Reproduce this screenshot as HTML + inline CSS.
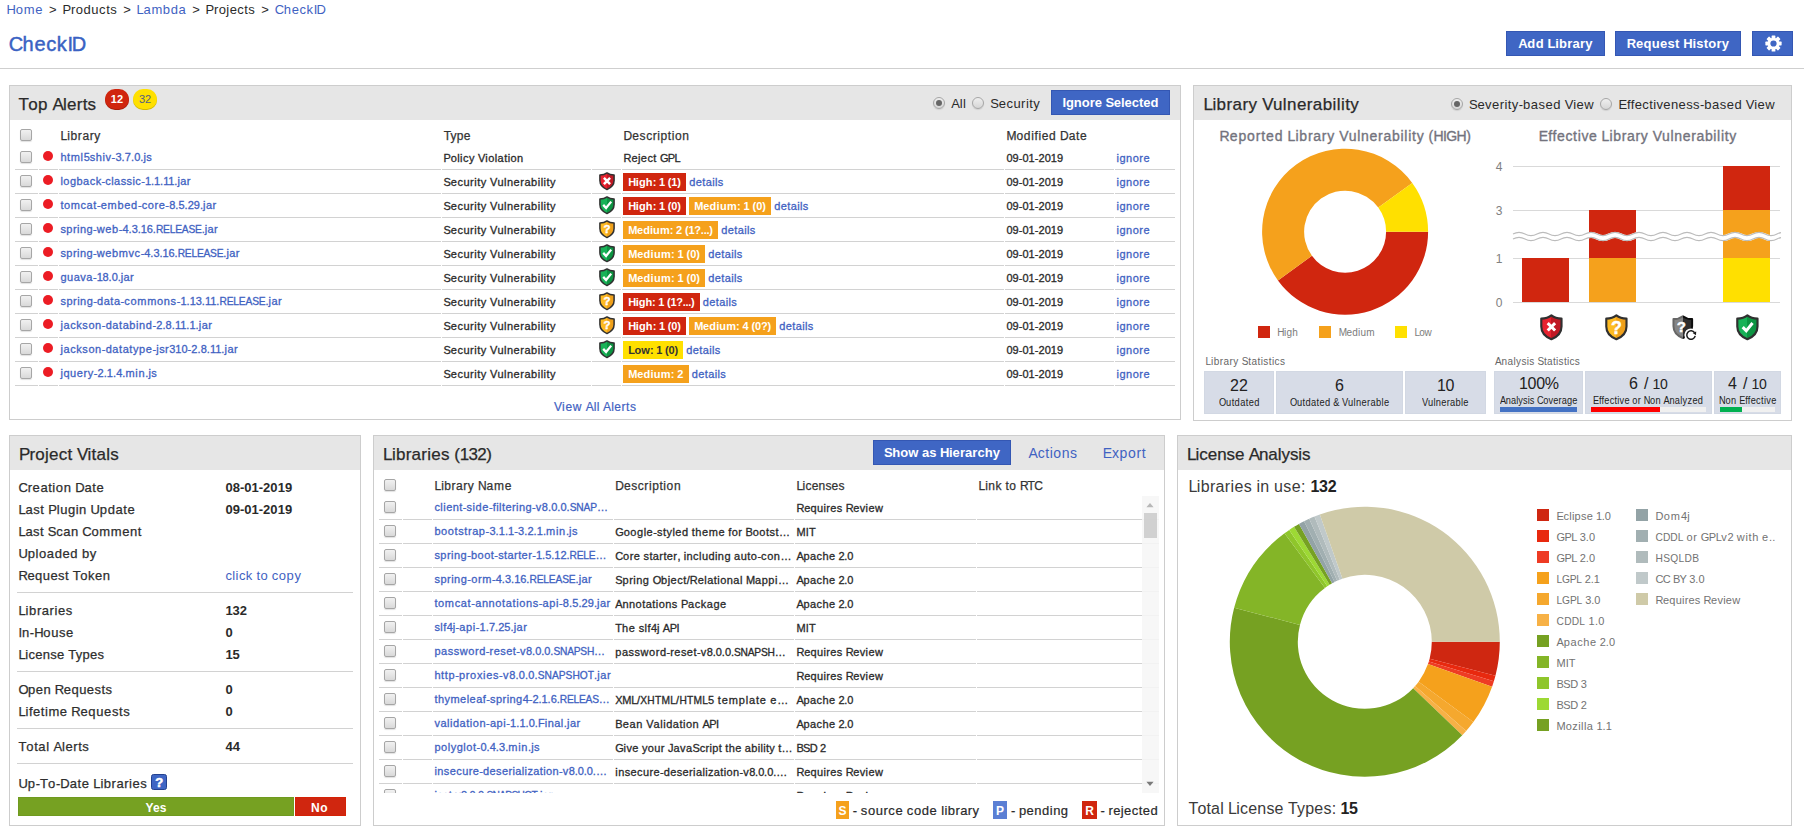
<!DOCTYPE html>
<html><head><meta charset="utf-8"><title>CheckID</title><style>
html,body{margin:0;padding:0;background:#fff}
body{width:1810px;height:834px;overflow:hidden;position:relative;font-family:"Liberation Sans",sans-serif;}
.a{position:absolute;box-sizing:border-box;display:block}
.t{position:absolute;white-space:nowrap;display:block}
.clip{position:absolute;overflow:hidden}
svg{overflow:visible}
</style></head><body>
<span class="t" style="left:6.60px;top:2px;font-size:13px;line-height:15px;color:#3f62c2;"><span style="letter-spacing:-0.2px">H</span><span style="letter-spacing:0.74px">ome</span></span>
<span class="t" style="left:49.10px;top:2px;font-size:13px;line-height:15px;color:#2a2a2a;">&gt;</span>
<span class="t" style="left:62.50px;top:2px;font-size:13px;line-height:15px;color:#2a2a2a;"><span style="letter-spacing:-0.2px">P</span><span style="letter-spacing:0.53px">roducts</span></span>
<span class="t" style="left:123.30px;top:2px;font-size:13px;line-height:15px;color:#2a2a2a;">&gt;</span>
<span class="t" style="left:136.60px;top:2px;font-size:13px;line-height:15px;color:#3f62c2;"><span style="letter-spacing:-0.24px">L</span><span style="letter-spacing:0.59px">ambda</span></span>
<span class="t" style="left:192.30px;top:2px;font-size:13px;line-height:15px;color:#2a2a2a;">&gt;</span>
<span class="t" style="left:205.50px;top:2px;font-size:13px;line-height:15px;color:#2a2a2a;"><span style="letter-spacing:-0.26px">P</span><span style="letter-spacing:0.43px">rojects</span></span>
<span class="t" style="left:261.20px;top:2px;font-size:13px;line-height:15px;color:#2a2a2a;">&gt;</span>
<span class="t" style="left:274.70px;top:2px;font-size:13px;line-height:15px;color:#3f62c2;"><span style="letter-spacing:-0.23px">C</span><span style="letter-spacing:0.58px">heck</span><span style="letter-spacing:-0.68px">ID</span></span>
<span class="t" style="left:8.80px;top:33px;font-size:20px;line-height:22px;color:#3a62c3;-webkit-text-stroke:0.45px #3a62c3;"><span style="letter-spacing:-0.65px">C</span><span style="letter-spacing:0.66px">heck</span><span style="letter-spacing:-1.23px">ID</span></span>
<div class="a" style="left:0px;top:68px;width:1804px;height:1px;background:#cfcfcf;"></div>
<div class="a" style="left:1506px;top:31px;width:99px;height:25px;background:#3f66c4;border:1px solid #3457b3;"></div>
<span class="t" style="left:1518.15px;top:36.2px;font-size:13px;line-height:15px;color:#fff;font-weight:bold;"><span style="letter-spacing:-0.17px">A</span><span style="letter-spacing:0.33px">dd</span><span style="letter-spacing:-0.1px"> </span><span style="letter-spacing:-0.15px">L</span><span style="letter-spacing:0.25px">ibrary</span></span>
<div class="a" style="left:1615px;top:31px;width:126px;height:25px;background:#3f66c4;border:1px solid #3457b3;"></div>
<span class="t" style="left:1626.80px;top:36.2px;font-size:13px;line-height:15px;color:#fff;font-weight:bold;"><span style="letter-spacing:-0.18px">R</span><span style="letter-spacing:0.29px">equest</span><span style="letter-spacing:-0.1px"> </span><span style="letter-spacing:-0.18px">H</span><span style="letter-spacing:0.24px">istory</span></span>
<div class="a" style="left:1752px;top:31px;width:41px;height:25px;background:#3f66c4;border:1px solid #3457b3;"></div>
<svg class="a" style="left:1764.5px;top:34.8px" width="17" height="17" viewBox="-9 -9 18 18"><g fill="#fff"><rect x="-2" y="-8.6" width="4" height="5" rx="0.6" transform="rotate(0)"/><rect x="-2" y="-8.6" width="4" height="5" rx="0.6" transform="rotate(45)"/><rect x="-2" y="-8.6" width="4" height="5" rx="0.6" transform="rotate(90)"/><rect x="-2" y="-8.6" width="4" height="5" rx="0.6" transform="rotate(135)"/><rect x="-2" y="-8.6" width="4" height="5" rx="0.6" transform="rotate(180)"/><rect x="-2" y="-8.6" width="4" height="5" rx="0.6" transform="rotate(225)"/><rect x="-2" y="-8.6" width="4" height="5" rx="0.6" transform="rotate(270)"/><rect x="-2" y="-8.6" width="4" height="5" rx="0.6" transform="rotate(315)"/><circle r="6.2"/></g><circle r="3.3" fill="#3f66c4"/></svg>
<div class="a" style="left:9px;top:85px;width:1172px;height:335px;background:#fff;border:1px solid #cdcdcd;"></div>
<div class="a" style="left:10px;top:86px;width:1170px;height:34px;background:#e6e6e6;"></div>
<span class="t" style="left:18.60px;top:95px;font-size:17px;line-height:19px;color:#2a2a2a;-webkit-text-stroke:0.25px #2a2a2a;"><span style="letter-spacing:-0.71px">T</span><span style="letter-spacing:0.34px">op</span><span style="letter-spacing:-0.14px"> </span><span style="letter-spacing:-0.77px">A</span><span style="letter-spacing:0.23px">lerts</span></span>
<div class="a" style="left:1193px;top:85px;width:599px;height:336px;background:#fff;border:1px solid #cdcdcd;"></div>
<div class="a" style="left:1194px;top:86px;width:597px;height:34px;background:#e6e6e6;"></div>
<span class="t" style="left:1203.40px;top:95px;font-size:17px;line-height:19px;color:#2a2a2a;-webkit-text-stroke:0.25px #2a2a2a;"><span style="letter-spacing:-0.44px">L</span><span style="letter-spacing:0.43px">ibrary</span><span style="letter-spacing:-0.04px"> </span><span style="letter-spacing:-0.53px">V</span><span style="letter-spacing:0.41px">ulnerability</span></span>
<div class="a" style="left:9px;top:435px;width:352px;height:391px;background:#fff;border:1px solid #cdcdcd;"></div>
<div class="a" style="left:10px;top:436px;width:350px;height:34px;background:#e6e6e6;"></div>
<span class="t" style="left:18.90px;top:445px;font-size:17px;line-height:19px;color:#2a2a2a;-webkit-text-stroke:0.25px #2a2a2a;"><span style="letter-spacing:-0.79px">P</span><span style="letter-spacing:0.24px">roject</span><span style="letter-spacing:-0.15px"> </span><span style="letter-spacing:-0.79px">V</span><span style="letter-spacing:0.21px">itals</span></span>
<div class="a" style="left:373px;top:435px;width:792px;height:391px;background:#fff;border:1px solid #cdcdcd;"></div>
<div class="a" style="left:374px;top:436px;width:790px;height:34px;background:#e6e6e6;"></div>
<span class="t" style="left:383.10px;top:445px;font-size:17px;line-height:19px;color:#2a2a2a;-webkit-text-stroke:0.25px #2a2a2a;"><span style="letter-spacing:-0.65px">L</span><span style="letter-spacing:0.25px">ibraries</span><span style="letter-spacing:-0.16px"> (</span><span style="letter-spacing:-0.65px">132</span><span style="letter-spacing:-0.17px">)</span></span>
<div class="a" style="left:1177px;top:435px;width:615px;height:391px;background:#fff;border:1px solid #cdcdcd;"></div>
<div class="a" style="left:1178px;top:436px;width:613px;height:34px;background:#e6e6e6;"></div>
<span class="t" style="left:1187.10px;top:445px;font-size:17px;line-height:19px;color:#2a2a2a;-webkit-text-stroke:0.25px #2a2a2a;"><span style="letter-spacing:-1.01px">L</span><span style="letter-spacing:-0.05px">icense</span><span style="letter-spacing:-0.33px"> </span><span style="letter-spacing:-1.21px">A</span><span style="letter-spacing:-0.05px">nalysis</span></span>
<div class="a" style="left:105px;top:89px;width:24px;height:20px;background:#d0260f;border-radius:10px;box-shadow:0 1px 0 #a81d0a;"></div>
<span class="t" style="left:110.75px;top:93px;font-size:11px;line-height:12px;color:#fff;font-weight:bold;"><span style="letter-spacing:0.13px">12</span></span>
<div class="a" style="left:133px;top:89px;width:24px;height:20px;background:#ffe000;border-radius:10px;box-shadow:0 1px 0 #d4ba00;"></div>
<span class="t" style="left:139.00px;top:93px;font-size:11px;line-height:12px;color:#555e80;"><span style="letter-spacing:-0.12px">32</span></span>
<div class="a" style="left:933px;top:97px;width:12px;height:12px;border:1px solid #a6a6a6;border-radius:50%;background:linear-gradient(#efefef,#d6d6d6);box-shadow:0 1px 1px rgba(0,0,0,.10);"></div>
<div class="a" style="left:936px;top:100px;width:6px;height:6px;background:#666;border-radius:50%;"></div>
<span class="t" style="left:951.20px;top:96px;font-size:13px;line-height:15px;color:#2a2a2a;">A<span style="letter-spacing:0.33px">ll</span></span>
<div class="a" style="left:972px;top:97px;width:12px;height:12px;border:1px solid #a6a6a6;border-radius:50%;background:linear-gradient(#efefef,#d6d6d6);box-shadow:0 1px 1px rgba(0,0,0,.10);"></div>
<span class="t" style="left:990.30px;top:96px;font-size:13px;line-height:15px;color:#2a2a2a;"><span style="letter-spacing:-0.21px">S</span><span style="letter-spacing:0.46px">ecurity</span></span>
<div class="a" style="left:1051px;top:90px;width:119px;height:25px;background:#3f66c4;border:1px solid #3457b3;"></div>
<span class="t" style="left:1062.50px;top:95.2px;font-size:13px;line-height:15px;color:#fff;font-weight:bold;"><span style="letter-spacing:-0.2px">I</span><span style="letter-spacing:0.01px">gnore</span><span style="letter-spacing:-0.24px"> </span><span style="letter-spacing:-0.49px">S</span><span style="letter-spacing:0.01px">elected</span></span>
<div class="a" style="left:20px;top:129px;width:12px;height:12px;border:1px solid #a6a6a6;border-radius:2px;background:linear-gradient(#f1f1f1,#d9d9d9);box-shadow:0 1px 1px rgba(0,0,0,.12);"></div>
<span class="t" style="left:60.50px;top:129px;font-size:12px;line-height:14px;color:#333;-webkit-text-stroke:0.25px #333;"><span style="letter-spacing:0.08px">L</span><span style="letter-spacing:0.62px">ibrary</span></span>
<span class="t" style="left:443.70px;top:129px;font-size:12px;line-height:14px;color:#333;-webkit-text-stroke:0.25px #333;"><span style="letter-spacing:-0.47px">T</span><span style="letter-spacing:0.26px">ype</span></span>
<span class="t" style="left:623.60px;top:129px;font-size:12px;line-height:14px;color:#333;-webkit-text-stroke:0.25px #333;"><span style="letter-spacing:0.03px">D</span><span style="letter-spacing:0.59px">escription</span></span>
<span class="t" style="left:1006.40px;top:129px;font-size:12px;line-height:14px;color:#333;-webkit-text-stroke:0.25px #333;"><span style="letter-spacing:0.12px">M</span><span style="letter-spacing:0.64px">odified</span><span style="letter-spacing:0.18px"> </span><span style="letter-spacing:0.11px">D</span><span style="letter-spacing:0.7px">ate</span></span>
<div class="a" style="left:15px;top:169px;width:23px;height:1px;background:#d2d2d2;"></div>
<div class="a" style="left:39px;top:169px;width:19px;height:1px;background:#d2d2d2;"></div>
<div class="a" style="left:59px;top:169px;width:382px;height:1px;background:#d2d2d2;"></div>
<div class="a" style="left:442px;top:169px;width:149px;height:1px;background:#d2d2d2;"></div>
<div class="a" style="left:592px;top:169px;width:29px;height:1px;background:#d2d2d2;"></div>
<div class="a" style="left:622px;top:169px;width:382px;height:1px;background:#d2d2d2;"></div>
<div class="a" style="left:1005px;top:169px;width:109px;height:1px;background:#d2d2d2;"></div>
<div class="a" style="left:1115px;top:169px;width:60px;height:1px;background:#d2d2d2;"></div>
<div class="a" style="left:20px;top:151px;width:12px;height:12px;border:1px solid #a6a6a6;border-radius:2px;background:linear-gradient(#f1f1f1,#d9d9d9);box-shadow:0 1px 1px rgba(0,0,0,.12);"></div>
<div class="a" style="left:43px;top:151px;width:10px;height:10px;background:#ec1c24;border-radius:50%;"></div>
<span class="t" style="left:60.40px;top:151px;font-size:11px;line-height:12px;color:#3f62c2;-webkit-text-stroke:0.3px #3f62c2;"><span style="letter-spacing:0.61px">html</span><span style="letter-spacing:0.02px">5</span><span style="letter-spacing:0.57px">shiv</span><span style="letter-spacing:0.16px">-</span><span style="letter-spacing:0.02px">3</span><span style="letter-spacing:0.14px">.</span><span style="letter-spacing:0.02px">7</span><span style="letter-spacing:0.14px">.</span><span style="letter-spacing:0.02px">0</span><span style="letter-spacing:0.14px">.</span><span style="letter-spacing:0.46px">js</span></span>
<span class="t" style="left:443.40px;top:152px;font-size:11px;line-height:12px;color:#2a2a2a;-webkit-text-stroke:0.3px #2a2a2a;"><span style="letter-spacing:-0.08px">P</span><span style="letter-spacing:0.44px">olicy</span><span style="letter-spacing:0.09px"> </span><span style="letter-spacing:-0.08px">V</span><span style="letter-spacing:0.44px">iolation</span></span>
<span class="t" style="left:623.60px;top:152px;font-size:11px;line-height:12px;color:#2a2a2a;-webkit-text-stroke:0.3px #2a2a2a;"><span style="letter-spacing:-0.14px">R</span><span style="letter-spacing:0.43px">eject</span><span style="letter-spacing:0.07px"> </span><span style="letter-spacing:-0.71px">GPL</span></span>
<span class="t" style="left:1006.40px;top:152px;font-size:11px;line-height:12px;color:#2a2a2a;-webkit-text-stroke:0.3px #2a2a2a;">09<span style="letter-spacing:0.15px">-</span>01<span style="letter-spacing:0.15px">-</span>2019</span>
<span class="t" style="left:1116.50px;top:152px;font-size:11px;line-height:12px;color:#3f62c2;-webkit-text-stroke:0.3px #3f62c2;"><span style="letter-spacing:0.5px">ignore</span></span>
<div class="a" style="left:15px;top:193px;width:23px;height:1px;background:#d2d2d2;"></div>
<div class="a" style="left:39px;top:193px;width:19px;height:1px;background:#d2d2d2;"></div>
<div class="a" style="left:59px;top:193px;width:382px;height:1px;background:#d2d2d2;"></div>
<div class="a" style="left:442px;top:193px;width:149px;height:1px;background:#d2d2d2;"></div>
<div class="a" style="left:592px;top:193px;width:29px;height:1px;background:#d2d2d2;"></div>
<div class="a" style="left:622px;top:193px;width:382px;height:1px;background:#d2d2d2;"></div>
<div class="a" style="left:1005px;top:193px;width:109px;height:1px;background:#d2d2d2;"></div>
<div class="a" style="left:1115px;top:193px;width:60px;height:1px;background:#d2d2d2;"></div>
<div class="a" style="left:20px;top:175px;width:12px;height:12px;border:1px solid #a6a6a6;border-radius:2px;background:linear-gradient(#f1f1f1,#d9d9d9);box-shadow:0 1px 1px rgba(0,0,0,.12);"></div>
<div class="a" style="left:43px;top:175px;width:10px;height:10px;background:#ec1c24;border-radius:50%;"></div>
<span class="t" style="left:60.40px;top:175px;font-size:11px;line-height:12px;color:#3f62c2;-webkit-text-stroke:0.3px #3f62c2;"><span style="letter-spacing:0.47px">logback</span><span style="letter-spacing:0.06px">-</span><span style="letter-spacing:0.41px">classic</span><span style="letter-spacing:0.06px">-</span><span style="letter-spacing:-0.14px">1</span><span style="letter-spacing:0.05px">.</span><span style="letter-spacing:-0.14px">1</span><span style="letter-spacing:0.05px">.</span><span style="letter-spacing:-0.13px">11</span><span style="letter-spacing:0.05px">.</span><span style="letter-spacing:0.35px">jar</span></span>
<span class="t" style="left:443.40px;top:176px;font-size:11px;line-height:12px;color:#2a2a2a;-webkit-text-stroke:0.3px #2a2a2a;"><span style="letter-spacing:0.02px">S</span><span style="letter-spacing:0.53px">ecurity</span><span style="letter-spacing:0.13px"> </span><span style="letter-spacing:0.02px">V</span><span style="letter-spacing:0.51px">ulnerability</span></span>
<svg class="a" style="left:599.3px;top:171.7px" width="16" height="18.4" viewBox="0 0 16 18.4"><defs><linearGradient id="gr599171" x1="0" x2="1" y1="0" y2="0"><stop offset="0.5" stop-color="#e8222f"/><stop offset="0.5" stop-color="#c01924"/></linearGradient></defs><path d="M8 0.9C9.9 2.4 12.4 3.1 15.1 3.1L15.1 8.6C15.1 13 11.6 16.1 8 17.6C4.4 16.1 0.9 13 0.9 8.6L0.9 3.1C3.6 3.1 6.1 2.4 8 0.9Z" fill="url(#gr599171)" stroke="#303030" stroke-width="1.5" stroke-linejoin="round"/><path d="M4.9 5.9L11.1 12.1M11.1 5.9L4.9 12.1" stroke="#fff" stroke-width="2.5" fill="none"/></svg>
<div class="a" style="left:623px;top:173px;width:63px;height:18px;background:#d0260f;"></div>
<span class="t" style="left:628.25px;top:176px;font-size:11px;line-height:12px;color:#fff;font-weight:bold;"><span style="letter-spacing:-0.34px">H</span><span style="letter-spacing:0.09px">igh</span><span style="letter-spacing:-0.18px">: </span><span style="letter-spacing:-0.14px">1</span><span style="letter-spacing:-0.18px"> (</span><span style="letter-spacing:-0.14px">1</span><span style="letter-spacing:-0.19px">)</span></span>
<span class="t" style="left:689.30px;top:176px;font-size:11px;line-height:12px;color:#3f62c2;-webkit-text-stroke:0.3px #3f62c2;"><span style="letter-spacing:0.37px">details</span></span>
<span class="t" style="left:1006.40px;top:176px;font-size:11px;line-height:12px;color:#2a2a2a;-webkit-text-stroke:0.3px #2a2a2a;">09<span style="letter-spacing:0.15px">-</span>01<span style="letter-spacing:0.15px">-</span>2019</span>
<span class="t" style="left:1116.50px;top:176px;font-size:11px;line-height:12px;color:#3f62c2;-webkit-text-stroke:0.3px #3f62c2;"><span style="letter-spacing:0.5px">ignore</span></span>
<div class="a" style="left:15px;top:217px;width:23px;height:1px;background:#d2d2d2;"></div>
<div class="a" style="left:39px;top:217px;width:19px;height:1px;background:#d2d2d2;"></div>
<div class="a" style="left:59px;top:217px;width:382px;height:1px;background:#d2d2d2;"></div>
<div class="a" style="left:442px;top:217px;width:149px;height:1px;background:#d2d2d2;"></div>
<div class="a" style="left:592px;top:217px;width:29px;height:1px;background:#d2d2d2;"></div>
<div class="a" style="left:622px;top:217px;width:382px;height:1px;background:#d2d2d2;"></div>
<div class="a" style="left:1005px;top:217px;width:109px;height:1px;background:#d2d2d2;"></div>
<div class="a" style="left:1115px;top:217px;width:60px;height:1px;background:#d2d2d2;"></div>
<div class="a" style="left:20px;top:199px;width:12px;height:12px;border:1px solid #a6a6a6;border-radius:2px;background:linear-gradient(#f1f1f1,#d9d9d9);box-shadow:0 1px 1px rgba(0,0,0,.12);"></div>
<div class="a" style="left:43px;top:199px;width:10px;height:10px;background:#ec1c24;border-radius:50%;"></div>
<span class="t" style="left:60.40px;top:199px;font-size:11px;line-height:12px;color:#3f62c2;-webkit-text-stroke:0.3px #3f62c2;"><span style="letter-spacing:0.58px">tomcat</span><span style="letter-spacing:0.13px">-</span><span style="letter-spacing:0.71px">embed</span><span style="letter-spacing:0.13px">-</span><span style="letter-spacing:0.57px">core</span><span style="letter-spacing:0.13px">-</span><span style="letter-spacing:-0.03px">8</span><span style="letter-spacing:0.11px">.</span><span style="letter-spacing:-0.03px">5</span><span style="letter-spacing:0.11px">.</span><span style="letter-spacing:-0.03px">29</span><span style="letter-spacing:0.11px">.</span><span style="letter-spacing:0.43px">jar</span></span>
<span class="t" style="left:443.40px;top:200px;font-size:11px;line-height:12px;color:#2a2a2a;-webkit-text-stroke:0.3px #2a2a2a;"><span style="letter-spacing:0.02px">S</span><span style="letter-spacing:0.53px">ecurity</span><span style="letter-spacing:0.13px"> </span><span style="letter-spacing:0.02px">V</span><span style="letter-spacing:0.51px">ulnerability</span></span>
<svg class="a" style="left:599.3px;top:195.7px" width="16" height="18.4" viewBox="0 0 16 18.4"><defs><linearGradient id="gg599195" x1="0" x2="1" y1="0" y2="0"><stop offset="0.5" stop-color="#18b257"/><stop offset="0.5" stop-color="#0d9442"/></linearGradient></defs><path d="M8 0.9C9.9 2.4 12.4 3.1 15.1 3.1L15.1 8.6C15.1 13 11.6 16.1 8 17.6C4.4 16.1 0.9 13 0.9 8.6L0.9 3.1C3.6 3.1 6.1 2.4 8 0.9Z" fill="url(#gg599195)" stroke="#303030" stroke-width="1.5" stroke-linejoin="round"/><path d="M4.2 8.9L7.1 12L12.2 5.6" stroke="#fff" stroke-width="2.3" fill="none"/></svg>
<div class="a" style="left:623px;top:197px;width:63px;height:18px;background:#d0260f;"></div>
<span class="t" style="left:628.25px;top:200px;font-size:11px;line-height:12px;color:#fff;font-weight:bold;"><span style="letter-spacing:-0.34px">H</span><span style="letter-spacing:0.09px">igh</span><span style="letter-spacing:-0.18px">: </span><span style="letter-spacing:-0.14px">1</span><span style="letter-spacing:-0.18px"> (</span><span style="letter-spacing:-0.14px">0</span><span style="letter-spacing:-0.19px">)</span></span>
<div class="a" style="left:689px;top:197px;width:82px;height:18px;background:#f5a11c;"></div>
<span class="t" style="left:694.25px;top:200px;font-size:11px;line-height:12px;color:#fff;font-weight:bold;"><span style="letter-spacing:-0.18px">M</span><span style="letter-spacing:0.26px">edium</span><span style="letter-spacing:-0.1px">: </span>1<span style="letter-spacing:-0.1px"> (</span>0<span style="letter-spacing:-0.11px">)</span></span>
<span class="t" style="left:774.30px;top:200px;font-size:11px;line-height:12px;color:#3f62c2;-webkit-text-stroke:0.3px #3f62c2;"><span style="letter-spacing:0.37px">details</span></span>
<span class="t" style="left:1006.40px;top:200px;font-size:11px;line-height:12px;color:#2a2a2a;-webkit-text-stroke:0.3px #2a2a2a;">09<span style="letter-spacing:0.15px">-</span>01<span style="letter-spacing:0.15px">-</span>2019</span>
<span class="t" style="left:1116.50px;top:200px;font-size:11px;line-height:12px;color:#3f62c2;-webkit-text-stroke:0.3px #3f62c2;"><span style="letter-spacing:0.5px">ignore</span></span>
<div class="a" style="left:15px;top:241px;width:23px;height:1px;background:#d2d2d2;"></div>
<div class="a" style="left:39px;top:241px;width:19px;height:1px;background:#d2d2d2;"></div>
<div class="a" style="left:59px;top:241px;width:382px;height:1px;background:#d2d2d2;"></div>
<div class="a" style="left:442px;top:241px;width:149px;height:1px;background:#d2d2d2;"></div>
<div class="a" style="left:592px;top:241px;width:29px;height:1px;background:#d2d2d2;"></div>
<div class="a" style="left:622px;top:241px;width:382px;height:1px;background:#d2d2d2;"></div>
<div class="a" style="left:1005px;top:241px;width:109px;height:1px;background:#d2d2d2;"></div>
<div class="a" style="left:1115px;top:241px;width:60px;height:1px;background:#d2d2d2;"></div>
<div class="a" style="left:20px;top:223px;width:12px;height:12px;border:1px solid #a6a6a6;border-radius:2px;background:linear-gradient(#f1f1f1,#d9d9d9);box-shadow:0 1px 1px rgba(0,0,0,.12);"></div>
<div class="a" style="left:43px;top:223px;width:10px;height:10px;background:#ec1c24;border-radius:50%;"></div>
<span class="t" style="left:60.40px;top:223px;font-size:11px;line-height:12px;color:#3f62c2;-webkit-text-stroke:0.3px #3f62c2;"><span style="letter-spacing:0.45px">spring</span><span style="letter-spacing:0.08px">-</span><span style="letter-spacing:0.61px">web</span><span style="letter-spacing:0.08px">-</span><span style="letter-spacing:-0.12px">4</span><span style="letter-spacing:0.06px">.</span><span style="letter-spacing:-0.12px">3</span><span style="letter-spacing:0.06px">.</span><span style="letter-spacing:-0.12px">16</span><span style="letter-spacing:0.06px">.</span><span style="letter-spacing:-0.21px;font-size:10.23px">RELEASE</span><span style="letter-spacing:0.06px">.</span><span style="letter-spacing:0.37px">jar</span></span>
<span class="t" style="left:443.40px;top:224px;font-size:11px;line-height:12px;color:#2a2a2a;-webkit-text-stroke:0.3px #2a2a2a;"><span style="letter-spacing:0.02px">S</span><span style="letter-spacing:0.53px">ecurity</span><span style="letter-spacing:0.13px"> </span><span style="letter-spacing:0.02px">V</span><span style="letter-spacing:0.51px">ulnerability</span></span>
<svg class="a" style="left:599.3px;top:219.7px" width="16" height="18.4" viewBox="0 0 16 18.4"><defs><linearGradient id="gy599219" x1="0" x2="1" y1="0" y2="0"><stop offset="0.5" stop-color="#fdbb22"/><stop offset="0.5" stop-color="#efa01b"/></linearGradient></defs><path d="M8 0.9C9.9 2.4 12.4 3.1 15.1 3.1L15.1 8.6C15.1 13 11.6 16.1 8 17.6C4.4 16.1 0.9 13 0.9 8.6L0.9 3.1C3.6 3.1 6.1 2.4 8 0.9Z" fill="url(#gy599219)" stroke="#303030" stroke-width="1.5" stroke-linejoin="round"/><text x="8" y="13.4" font-family="Liberation Sans,sans-serif" font-weight="bold" font-size="11.5" fill="#fff" stroke="#fff" stroke-width="0.4" text-anchor="middle">?</text></svg>
<div class="a" style="left:623px;top:221px;width:95px;height:18px;background:#f5a11c;"></div>
<span class="t" style="left:628.25px;top:224px;font-size:11px;line-height:12px;color:#fff;font-weight:bold;"><span style="letter-spacing:-0.43px">M</span><span style="letter-spacing:0.07px">edium</span><span style="letter-spacing:-0.19px">: </span><span style="letter-spacing:-0.17px">2</span><span style="letter-spacing:-0.19px"> (</span><span style="letter-spacing:-0.17px">1</span><span style="letter-spacing:-0.22px">?...)</span></span>
<span class="t" style="left:721.30px;top:224px;font-size:11px;line-height:12px;color:#3f62c2;-webkit-text-stroke:0.3px #3f62c2;"><span style="letter-spacing:0.37px">details</span></span>
<span class="t" style="left:1006.40px;top:224px;font-size:11px;line-height:12px;color:#2a2a2a;-webkit-text-stroke:0.3px #2a2a2a;">09<span style="letter-spacing:0.15px">-</span>01<span style="letter-spacing:0.15px">-</span>2019</span>
<span class="t" style="left:1116.50px;top:224px;font-size:11px;line-height:12px;color:#3f62c2;-webkit-text-stroke:0.3px #3f62c2;"><span style="letter-spacing:0.5px">ignore</span></span>
<div class="a" style="left:15px;top:265px;width:23px;height:1px;background:#d2d2d2;"></div>
<div class="a" style="left:39px;top:265px;width:19px;height:1px;background:#d2d2d2;"></div>
<div class="a" style="left:59px;top:265px;width:382px;height:1px;background:#d2d2d2;"></div>
<div class="a" style="left:442px;top:265px;width:149px;height:1px;background:#d2d2d2;"></div>
<div class="a" style="left:592px;top:265px;width:29px;height:1px;background:#d2d2d2;"></div>
<div class="a" style="left:622px;top:265px;width:382px;height:1px;background:#d2d2d2;"></div>
<div class="a" style="left:1005px;top:265px;width:109px;height:1px;background:#d2d2d2;"></div>
<div class="a" style="left:1115px;top:265px;width:60px;height:1px;background:#d2d2d2;"></div>
<div class="a" style="left:20px;top:247px;width:12px;height:12px;border:1px solid #a6a6a6;border-radius:2px;background:linear-gradient(#f1f1f1,#d9d9d9);box-shadow:0 1px 1px rgba(0,0,0,.12);"></div>
<div class="a" style="left:43px;top:247px;width:10px;height:10px;background:#ec1c24;border-radius:50%;"></div>
<span class="t" style="left:60.40px;top:247px;font-size:11px;line-height:12px;color:#3f62c2;-webkit-text-stroke:0.3px #3f62c2;"><span style="letter-spacing:0.44px">spring</span><span style="letter-spacing:0.07px">-</span><span style="letter-spacing:0.59px">webmvc</span><span style="letter-spacing:0.07px">-</span><span style="letter-spacing:-0.13px">4</span><span style="letter-spacing:0.06px">.</span><span style="letter-spacing:-0.13px">3</span><span style="letter-spacing:0.06px">.</span><span style="letter-spacing:-0.13px">16</span><span style="letter-spacing:0.06px">.</span><span style="letter-spacing:-0.23px;font-size:10.23px">RELEASE</span><span style="letter-spacing:0.06px">.</span><span style="letter-spacing:0.36px">jar</span></span>
<span class="t" style="left:443.40px;top:248px;font-size:11px;line-height:12px;color:#2a2a2a;-webkit-text-stroke:0.3px #2a2a2a;"><span style="letter-spacing:0.02px">S</span><span style="letter-spacing:0.53px">ecurity</span><span style="letter-spacing:0.13px"> </span><span style="letter-spacing:0.02px">V</span><span style="letter-spacing:0.51px">ulnerability</span></span>
<svg class="a" style="left:599.3px;top:243.7px" width="16" height="18.4" viewBox="0 0 16 18.4"><defs><linearGradient id="gg599243" x1="0" x2="1" y1="0" y2="0"><stop offset="0.5" stop-color="#18b257"/><stop offset="0.5" stop-color="#0d9442"/></linearGradient></defs><path d="M8 0.9C9.9 2.4 12.4 3.1 15.1 3.1L15.1 8.6C15.1 13 11.6 16.1 8 17.6C4.4 16.1 0.9 13 0.9 8.6L0.9 3.1C3.6 3.1 6.1 2.4 8 0.9Z" fill="url(#gg599243)" stroke="#303030" stroke-width="1.5" stroke-linejoin="round"/><path d="M4.2 8.9L7.1 12L12.2 5.6" stroke="#fff" stroke-width="2.3" fill="none"/></svg>
<div class="a" style="left:623px;top:245px;width:82px;height:18px;background:#f5a11c;"></div>
<span class="t" style="left:628.25px;top:248px;font-size:11px;line-height:12px;color:#fff;font-weight:bold;"><span style="letter-spacing:-0.18px">M</span><span style="letter-spacing:0.26px">edium</span><span style="letter-spacing:-0.1px">: </span>1<span style="letter-spacing:-0.1px"> (</span>0<span style="letter-spacing:-0.11px">)</span></span>
<span class="t" style="left:708.30px;top:248px;font-size:11px;line-height:12px;color:#3f62c2;-webkit-text-stroke:0.3px #3f62c2;"><span style="letter-spacing:0.37px">details</span></span>
<span class="t" style="left:1006.40px;top:248px;font-size:11px;line-height:12px;color:#2a2a2a;-webkit-text-stroke:0.3px #2a2a2a;">09<span style="letter-spacing:0.15px">-</span>01<span style="letter-spacing:0.15px">-</span>2019</span>
<span class="t" style="left:1116.50px;top:248px;font-size:11px;line-height:12px;color:#3f62c2;-webkit-text-stroke:0.3px #3f62c2;"><span style="letter-spacing:0.5px">ignore</span></span>
<div class="a" style="left:15px;top:289px;width:23px;height:1px;background:#d2d2d2;"></div>
<div class="a" style="left:39px;top:289px;width:19px;height:1px;background:#d2d2d2;"></div>
<div class="a" style="left:59px;top:289px;width:382px;height:1px;background:#d2d2d2;"></div>
<div class="a" style="left:442px;top:289px;width:149px;height:1px;background:#d2d2d2;"></div>
<div class="a" style="left:592px;top:289px;width:29px;height:1px;background:#d2d2d2;"></div>
<div class="a" style="left:622px;top:289px;width:382px;height:1px;background:#d2d2d2;"></div>
<div class="a" style="left:1005px;top:289px;width:109px;height:1px;background:#d2d2d2;"></div>
<div class="a" style="left:1115px;top:289px;width:60px;height:1px;background:#d2d2d2;"></div>
<div class="a" style="left:20px;top:271px;width:12px;height:12px;border:1px solid #a6a6a6;border-radius:2px;background:linear-gradient(#f1f1f1,#d9d9d9);box-shadow:0 1px 1px rgba(0,0,0,.12);"></div>
<div class="a" style="left:43px;top:271px;width:10px;height:10px;background:#ec1c24;border-radius:50%;"></div>
<span class="t" style="left:60.40px;top:271px;font-size:11px;line-height:12px;color:#3f62c2;-webkit-text-stroke:0.3px #3f62c2;"><span style="letter-spacing:0.51px">guava</span><span style="letter-spacing:0.06px">-</span><span style="letter-spacing:-0.15px">18</span><span style="letter-spacing:0.05px">.</span><span style="letter-spacing:-0.15px">0</span><span style="letter-spacing:0.05px">.</span><span style="letter-spacing:0.35px">jar</span></span>
<span class="t" style="left:443.40px;top:272px;font-size:11px;line-height:12px;color:#2a2a2a;-webkit-text-stroke:0.3px #2a2a2a;"><span style="letter-spacing:0.02px">S</span><span style="letter-spacing:0.53px">ecurity</span><span style="letter-spacing:0.13px"> </span><span style="letter-spacing:0.02px">V</span><span style="letter-spacing:0.51px">ulnerability</span></span>
<svg class="a" style="left:599.3px;top:267.7px" width="16" height="18.4" viewBox="0 0 16 18.4"><defs><linearGradient id="gg599267" x1="0" x2="1" y1="0" y2="0"><stop offset="0.5" stop-color="#18b257"/><stop offset="0.5" stop-color="#0d9442"/></linearGradient></defs><path d="M8 0.9C9.9 2.4 12.4 3.1 15.1 3.1L15.1 8.6C15.1 13 11.6 16.1 8 17.6C4.4 16.1 0.9 13 0.9 8.6L0.9 3.1C3.6 3.1 6.1 2.4 8 0.9Z" fill="url(#gg599267)" stroke="#303030" stroke-width="1.5" stroke-linejoin="round"/><path d="M4.2 8.9L7.1 12L12.2 5.6" stroke="#fff" stroke-width="2.3" fill="none"/></svg>
<div class="a" style="left:623px;top:269px;width:82px;height:18px;background:#f5a11c;"></div>
<span class="t" style="left:628.25px;top:272px;font-size:11px;line-height:12px;color:#fff;font-weight:bold;"><span style="letter-spacing:-0.18px">M</span><span style="letter-spacing:0.26px">edium</span><span style="letter-spacing:-0.1px">: </span>1<span style="letter-spacing:-0.1px"> (</span>0<span style="letter-spacing:-0.11px">)</span></span>
<span class="t" style="left:708.30px;top:272px;font-size:11px;line-height:12px;color:#3f62c2;-webkit-text-stroke:0.3px #3f62c2;"><span style="letter-spacing:0.37px">details</span></span>
<span class="t" style="left:1006.40px;top:272px;font-size:11px;line-height:12px;color:#2a2a2a;-webkit-text-stroke:0.3px #2a2a2a;">09<span style="letter-spacing:0.15px">-</span>01<span style="letter-spacing:0.15px">-</span>2019</span>
<span class="t" style="left:1116.50px;top:272px;font-size:11px;line-height:12px;color:#3f62c2;-webkit-text-stroke:0.3px #3f62c2;"><span style="letter-spacing:0.5px">ignore</span></span>
<div class="a" style="left:15px;top:313px;width:23px;height:1px;background:#d2d2d2;"></div>
<div class="a" style="left:39px;top:313px;width:19px;height:1px;background:#d2d2d2;"></div>
<div class="a" style="left:59px;top:313px;width:382px;height:1px;background:#d2d2d2;"></div>
<div class="a" style="left:442px;top:313px;width:149px;height:1px;background:#d2d2d2;"></div>
<div class="a" style="left:592px;top:313px;width:29px;height:1px;background:#d2d2d2;"></div>
<div class="a" style="left:622px;top:313px;width:382px;height:1px;background:#d2d2d2;"></div>
<div class="a" style="left:1005px;top:313px;width:109px;height:1px;background:#d2d2d2;"></div>
<div class="a" style="left:1115px;top:313px;width:60px;height:1px;background:#d2d2d2;"></div>
<div class="a" style="left:20px;top:295px;width:12px;height:12px;border:1px solid #a6a6a6;border-radius:2px;background:linear-gradient(#f1f1f1,#d9d9d9);box-shadow:0 1px 1px rgba(0,0,0,.12);"></div>
<div class="a" style="left:43px;top:295px;width:10px;height:10px;background:#ec1c24;border-radius:50%;"></div>
<span class="t" style="left:60.40px;top:295px;font-size:11px;line-height:12px;color:#3f62c2;-webkit-text-stroke:0.3px #3f62c2;"><span style="letter-spacing:0.49px">spring</span><span style="letter-spacing:0.1px">-</span><span style="letter-spacing:0.53px">data</span><span style="letter-spacing:0.1px">-</span><span style="letter-spacing:0.67px">commons</span><span style="letter-spacing:0.1px">-</span><span style="letter-spacing:-0.07px">1</span><span style="letter-spacing:0.09px">.</span><span style="letter-spacing:-0.07px">13</span><span style="letter-spacing:0.09px">.</span><span style="letter-spacing:-0.07px">11</span><span style="letter-spacing:0.09px">.</span><span style="letter-spacing:-0.16px;font-size:10.23px">RELEASE</span><span style="letter-spacing:0.09px">.</span><span style="letter-spacing:0.4px">jar</span></span>
<span class="t" style="left:443.40px;top:296px;font-size:11px;line-height:12px;color:#2a2a2a;-webkit-text-stroke:0.3px #2a2a2a;"><span style="letter-spacing:0.02px">S</span><span style="letter-spacing:0.53px">ecurity</span><span style="letter-spacing:0.13px"> </span><span style="letter-spacing:0.02px">V</span><span style="letter-spacing:0.51px">ulnerability</span></span>
<svg class="a" style="left:599.3px;top:291.7px" width="16" height="18.4" viewBox="0 0 16 18.4"><defs><linearGradient id="gy599291" x1="0" x2="1" y1="0" y2="0"><stop offset="0.5" stop-color="#fdbb22"/><stop offset="0.5" stop-color="#efa01b"/></linearGradient></defs><path d="M8 0.9C9.9 2.4 12.4 3.1 15.1 3.1L15.1 8.6C15.1 13 11.6 16.1 8 17.6C4.4 16.1 0.9 13 0.9 8.6L0.9 3.1C3.6 3.1 6.1 2.4 8 0.9Z" fill="url(#gy599291)" stroke="#303030" stroke-width="1.5" stroke-linejoin="round"/><text x="8" y="13.4" font-family="Liberation Sans,sans-serif" font-weight="bold" font-size="11.5" fill="#fff" stroke="#fff" stroke-width="0.4" text-anchor="middle">?</text></svg>
<div class="a" style="left:623px;top:293px;width:76.5px;height:18px;background:#d0260f;"></div>
<span class="t" style="left:628.25px;top:296px;font-size:11px;line-height:12px;color:#fff;font-weight:bold;"><span style="letter-spacing:-0.52px">H</span><span style="letter-spacing:-0.04px">igh</span><span style="letter-spacing:-0.25px">: </span><span style="letter-spacing:-0.28px">1</span><span style="letter-spacing:-0.25px"> (</span><span style="letter-spacing:-0.28px">1</span><span style="letter-spacing:-0.29px">?...)</span></span>
<span class="t" style="left:702.80px;top:296px;font-size:11px;line-height:12px;color:#3f62c2;-webkit-text-stroke:0.3px #3f62c2;"><span style="letter-spacing:0.37px">details</span></span>
<span class="t" style="left:1006.40px;top:296px;font-size:11px;line-height:12px;color:#2a2a2a;-webkit-text-stroke:0.3px #2a2a2a;">09<span style="letter-spacing:0.15px">-</span>01<span style="letter-spacing:0.15px">-</span>2019</span>
<span class="t" style="left:1116.50px;top:296px;font-size:11px;line-height:12px;color:#3f62c2;-webkit-text-stroke:0.3px #3f62c2;"><span style="letter-spacing:0.5px">ignore</span></span>
<div class="a" style="left:15px;top:337px;width:23px;height:1px;background:#d2d2d2;"></div>
<div class="a" style="left:39px;top:337px;width:19px;height:1px;background:#d2d2d2;"></div>
<div class="a" style="left:59px;top:337px;width:382px;height:1px;background:#d2d2d2;"></div>
<div class="a" style="left:442px;top:337px;width:149px;height:1px;background:#d2d2d2;"></div>
<div class="a" style="left:592px;top:337px;width:29px;height:1px;background:#d2d2d2;"></div>
<div class="a" style="left:622px;top:337px;width:382px;height:1px;background:#d2d2d2;"></div>
<div class="a" style="left:1005px;top:337px;width:109px;height:1px;background:#d2d2d2;"></div>
<div class="a" style="left:1115px;top:337px;width:60px;height:1px;background:#d2d2d2;"></div>
<div class="a" style="left:20px;top:319px;width:12px;height:12px;border:1px solid #a6a6a6;border-radius:2px;background:linear-gradient(#f1f1f1,#d9d9d9);box-shadow:0 1px 1px rgba(0,0,0,.12);"></div>
<div class="a" style="left:43px;top:319px;width:10px;height:10px;background:#ec1c24;border-radius:50%;"></div>
<span class="t" style="left:60.40px;top:319px;font-size:11px;line-height:12px;color:#3f62c2;-webkit-text-stroke:0.3px #3f62c2;"><span style="letter-spacing:0.59px">jackson</span><span style="letter-spacing:0.14px">-</span><span style="letter-spacing:0.58px">databind</span><span style="letter-spacing:0.14px">-</span><span style="letter-spacing:-0.01px">2</span><span style="letter-spacing:0.12px">.</span><span style="letter-spacing:-0.01px">8</span><span style="letter-spacing:0.12px">.</span><span style="letter-spacing:-0.01px">11</span><span style="letter-spacing:0.12px">.</span><span style="letter-spacing:-0.01px">1</span><span style="letter-spacing:0.12px">.</span><span style="letter-spacing:0.45px">jar</span></span>
<span class="t" style="left:443.40px;top:320px;font-size:11px;line-height:12px;color:#2a2a2a;-webkit-text-stroke:0.3px #2a2a2a;"><span style="letter-spacing:0.02px">S</span><span style="letter-spacing:0.53px">ecurity</span><span style="letter-spacing:0.13px"> </span><span style="letter-spacing:0.02px">V</span><span style="letter-spacing:0.51px">ulnerability</span></span>
<svg class="a" style="left:599.3px;top:315.7px" width="16" height="18.4" viewBox="0 0 16 18.4"><defs><linearGradient id="gy599315" x1="0" x2="1" y1="0" y2="0"><stop offset="0.5" stop-color="#fdbb22"/><stop offset="0.5" stop-color="#efa01b"/></linearGradient></defs><path d="M8 0.9C9.9 2.4 12.4 3.1 15.1 3.1L15.1 8.6C15.1 13 11.6 16.1 8 17.6C4.4 16.1 0.9 13 0.9 8.6L0.9 3.1C3.6 3.1 6.1 2.4 8 0.9Z" fill="url(#gy599315)" stroke="#303030" stroke-width="1.5" stroke-linejoin="round"/><text x="8" y="13.4" font-family="Liberation Sans,sans-serif" font-weight="bold" font-size="11.5" fill="#fff" stroke="#fff" stroke-width="0.4" text-anchor="middle">?</text></svg>
<div class="a" style="left:623px;top:317px;width:63px;height:18px;background:#d0260f;"></div>
<span class="t" style="left:628.25px;top:320px;font-size:11px;line-height:12px;color:#fff;font-weight:bold;"><span style="letter-spacing:-0.34px">H</span><span style="letter-spacing:0.09px">igh</span><span style="letter-spacing:-0.18px">: </span><span style="letter-spacing:-0.14px">1</span><span style="letter-spacing:-0.18px"> (</span><span style="letter-spacing:-0.14px">0</span><span style="letter-spacing:-0.19px">)</span></span>
<div class="a" style="left:689px;top:317px;width:87px;height:18px;background:#f5a11c;"></div>
<span class="t" style="left:694.25px;top:320px;font-size:11px;line-height:12px;color:#fff;font-weight:bold;"><span style="letter-spacing:-0.36px">M</span><span style="letter-spacing:0.13px">edium</span><span style="letter-spacing:-0.16px">: </span><span style="letter-spacing:-0.12px">4</span><span style="letter-spacing:-0.16px"> (</span><span style="letter-spacing:-0.12px">0</span><span style="letter-spacing:-0.25px">?)</span></span>
<span class="t" style="left:779.30px;top:320px;font-size:11px;line-height:12px;color:#3f62c2;-webkit-text-stroke:0.3px #3f62c2;"><span style="letter-spacing:0.37px">details</span></span>
<span class="t" style="left:1006.40px;top:320px;font-size:11px;line-height:12px;color:#2a2a2a;-webkit-text-stroke:0.3px #2a2a2a;">09<span style="letter-spacing:0.15px">-</span>01<span style="letter-spacing:0.15px">-</span>2019</span>
<span class="t" style="left:1116.50px;top:320px;font-size:11px;line-height:12px;color:#3f62c2;-webkit-text-stroke:0.3px #3f62c2;"><span style="letter-spacing:0.5px">ignore</span></span>
<div class="a" style="left:15px;top:361px;width:23px;height:1px;background:#d2d2d2;"></div>
<div class="a" style="left:39px;top:361px;width:19px;height:1px;background:#d2d2d2;"></div>
<div class="a" style="left:59px;top:361px;width:382px;height:1px;background:#d2d2d2;"></div>
<div class="a" style="left:442px;top:361px;width:149px;height:1px;background:#d2d2d2;"></div>
<div class="a" style="left:592px;top:361px;width:29px;height:1px;background:#d2d2d2;"></div>
<div class="a" style="left:622px;top:361px;width:382px;height:1px;background:#d2d2d2;"></div>
<div class="a" style="left:1005px;top:361px;width:109px;height:1px;background:#d2d2d2;"></div>
<div class="a" style="left:1115px;top:361px;width:60px;height:1px;background:#d2d2d2;"></div>
<div class="a" style="left:20px;top:343px;width:12px;height:12px;border:1px solid #a6a6a6;border-radius:2px;background:linear-gradient(#f1f1f1,#d9d9d9);box-shadow:0 1px 1px rgba(0,0,0,.12);"></div>
<div class="a" style="left:43px;top:343px;width:10px;height:10px;background:#ec1c24;border-radius:50%;"></div>
<span class="t" style="left:60.40px;top:343px;font-size:11px;line-height:12px;color:#3f62c2;-webkit-text-stroke:0.3px #3f62c2;"><span style="letter-spacing:0.59px">jackson</span><span style="letter-spacing:0.14px">-</span><span style="letter-spacing:0.58px">datatype</span><span style="letter-spacing:0.14px">-</span><span style="letter-spacing:0.43px">jsr</span><span style="letter-spacing:-0.01px">310</span><span style="letter-spacing:0.14px">-</span><span style="letter-spacing:-0.01px">2</span><span style="letter-spacing:0.12px">.</span><span style="letter-spacing:-0.01px">8</span><span style="letter-spacing:0.12px">.</span><span style="letter-spacing:-0.01px">11</span><span style="letter-spacing:0.12px">.</span><span style="letter-spacing:0.45px">jar</span></span>
<span class="t" style="left:443.40px;top:344px;font-size:11px;line-height:12px;color:#2a2a2a;-webkit-text-stroke:0.3px #2a2a2a;"><span style="letter-spacing:0.02px">S</span><span style="letter-spacing:0.53px">ecurity</span><span style="letter-spacing:0.13px"> </span><span style="letter-spacing:0.02px">V</span><span style="letter-spacing:0.51px">ulnerability</span></span>
<svg class="a" style="left:599.3px;top:339.7px" width="16" height="18.4" viewBox="0 0 16 18.4"><defs><linearGradient id="gg599339" x1="0" x2="1" y1="0" y2="0"><stop offset="0.5" stop-color="#18b257"/><stop offset="0.5" stop-color="#0d9442"/></linearGradient></defs><path d="M8 0.9C9.9 2.4 12.4 3.1 15.1 3.1L15.1 8.6C15.1 13 11.6 16.1 8 17.6C4.4 16.1 0.9 13 0.9 8.6L0.9 3.1C3.6 3.1 6.1 2.4 8 0.9Z" fill="url(#gg599339)" stroke="#303030" stroke-width="1.5" stroke-linejoin="round"/><path d="M4.2 8.9L7.1 12L12.2 5.6" stroke="#fff" stroke-width="2.3" fill="none"/></svg>
<div class="a" style="left:623px;top:341px;width:60px;height:18px;background:#ffe000;"></div>
<span class="t" style="left:628.25px;top:344px;font-size:11px;line-height:12px;color:#333;font-weight:bold;"><span style="letter-spacing:-0.36px">L</span><span style="letter-spacing:0.03px">ow</span><span style="letter-spacing:-0.21px">: </span><span style="letter-spacing:-0.21px">1</span><span style="letter-spacing:-0.21px"> (</span><span style="letter-spacing:-0.21px">0</span><span style="letter-spacing:-0.23px">)</span></span>
<span class="t" style="left:686.30px;top:344px;font-size:11px;line-height:12px;color:#3f62c2;-webkit-text-stroke:0.3px #3f62c2;"><span style="letter-spacing:0.37px">details</span></span>
<span class="t" style="left:1006.40px;top:344px;font-size:11px;line-height:12px;color:#2a2a2a;-webkit-text-stroke:0.3px #2a2a2a;">09<span style="letter-spacing:0.15px">-</span>01<span style="letter-spacing:0.15px">-</span>2019</span>
<span class="t" style="left:1116.50px;top:344px;font-size:11px;line-height:12px;color:#3f62c2;-webkit-text-stroke:0.3px #3f62c2;"><span style="letter-spacing:0.5px">ignore</span></span>
<div class="a" style="left:15px;top:385px;width:23px;height:1px;background:#d2d2d2;"></div>
<div class="a" style="left:39px;top:385px;width:19px;height:1px;background:#d2d2d2;"></div>
<div class="a" style="left:59px;top:385px;width:382px;height:1px;background:#d2d2d2;"></div>
<div class="a" style="left:442px;top:385px;width:149px;height:1px;background:#d2d2d2;"></div>
<div class="a" style="left:592px;top:385px;width:29px;height:1px;background:#d2d2d2;"></div>
<div class="a" style="left:622px;top:385px;width:382px;height:1px;background:#d2d2d2;"></div>
<div class="a" style="left:1005px;top:385px;width:109px;height:1px;background:#d2d2d2;"></div>
<div class="a" style="left:1115px;top:385px;width:60px;height:1px;background:#d2d2d2;"></div>
<div class="a" style="left:20px;top:367px;width:12px;height:12px;border:1px solid #a6a6a6;border-radius:2px;background:linear-gradient(#f1f1f1,#d9d9d9);box-shadow:0 1px 1px rgba(0,0,0,.12);"></div>
<div class="a" style="left:43px;top:367px;width:10px;height:10px;background:#ec1c24;border-radius:50%;"></div>
<span class="t" style="left:60.40px;top:367px;font-size:11px;line-height:12px;color:#3f62c2;-webkit-text-stroke:0.3px #3f62c2;"><span style="letter-spacing:0.56px">jquery</span><span style="letter-spacing:0.15px">-</span>2<span style="letter-spacing:0.13px">.</span>1<span style="letter-spacing:0.13px">.</span>4<span style="letter-spacing:0.13px">.</span><span style="letter-spacing:0.67px">min</span><span style="letter-spacing:0.13px">.</span><span style="letter-spacing:0.45px">js</span></span>
<span class="t" style="left:443.40px;top:368px;font-size:11px;line-height:12px;color:#2a2a2a;-webkit-text-stroke:0.3px #2a2a2a;"><span style="letter-spacing:0.02px">S</span><span style="letter-spacing:0.53px">ecurity</span><span style="letter-spacing:0.13px"> </span><span style="letter-spacing:0.02px">V</span><span style="letter-spacing:0.51px">ulnerability</span></span>
<div class="a" style="left:623px;top:365px;width:65.5px;height:18px;background:#f5a11c;"></div>
<span class="t" style="left:628.25px;top:368px;font-size:11px;line-height:12px;color:#fff;font-weight:bold;"><span style="letter-spacing:-0.23px">M</span><span style="letter-spacing:0.22px">edium</span><span style="letter-spacing:-0.12px">: </span><span style="letter-spacing:-0.03px">2</span></span>
<span class="t" style="left:691.80px;top:368px;font-size:11px;line-height:12px;color:#3f62c2;-webkit-text-stroke:0.3px #3f62c2;"><span style="letter-spacing:0.37px">details</span></span>
<span class="t" style="left:1006.40px;top:368px;font-size:11px;line-height:12px;color:#2a2a2a;-webkit-text-stroke:0.3px #2a2a2a;">09<span style="letter-spacing:0.15px">-</span>01<span style="letter-spacing:0.15px">-</span>2019</span>
<span class="t" style="left:1116.50px;top:368px;font-size:11px;line-height:12px;color:#3f62c2;-webkit-text-stroke:0.3px #3f62c2;"><span style="letter-spacing:0.5px">ignore</span></span>
<span class="t" style="left:554.05px;top:400px;font-size:12px;line-height:14px;color:#3f62c2;-webkit-text-stroke:0.2px #3f62c2;"><span style="letter-spacing:0.02px">V</span><span style="letter-spacing:0.69px">iew</span><span style="letter-spacing:0.14px"> </span><span style="letter-spacing:0.02px">A</span><span style="letter-spacing:0.31px">ll</span><span style="letter-spacing:0.14px"> </span><span style="letter-spacing:0.02px">A</span><span style="letter-spacing:0.52px">lerts</span></span>
<div class="a" style="left:1451px;top:98px;width:12px;height:12px;border:1px solid #a6a6a6;border-radius:50%;background:linear-gradient(#efefef,#d6d6d6);box-shadow:0 1px 1px rgba(0,0,0,.10);"></div>
<div class="a" style="left:1454px;top:101px;width:6px;height:6px;background:#666;border-radius:50%;"></div>
<span class="t" style="left:1469.10px;top:97px;font-size:13px;line-height:15px;color:#2a2a2a;"><span style="letter-spacing:-0.29px">S</span><span style="letter-spacing:0.41px">everity</span><span style="letter-spacing:0.03px">-</span><span style="letter-spacing:0.53px">based</span><span style="letter-spacing:0.02px"> </span><span style="letter-spacing:-0.29px">V</span><span style="letter-spacing:0.49px">iew</span></span>
<div class="a" style="left:1600px;top:98px;width:12px;height:12px;border:1px solid #a6a6a6;border-radius:50%;background:linear-gradient(#efefef,#d6d6d6);box-shadow:0 1px 1px rgba(0,0,0,.10);"></div>
<span class="t" style="left:1618.60px;top:97px;font-size:13px;line-height:15px;color:#2a2a2a;"><span style="letter-spacing:-0.35px">E</span><span style="letter-spacing:0.39px">ffectiveness</span>-<span style="letter-spacing:0.48px">based</span> <span style="letter-spacing:-0.35px">V</span><span style="letter-spacing:0.44px">iew</span></span>
<span class="t" style="left:1219.50px;top:128px;font-size:14px;line-height:16px;color:#73737d;-webkit-text-stroke:0.35px #73737d;"><span style="letter-spacing:0.16px">R</span><span style="letter-spacing:0.88px">eported</span><span style="letter-spacing:0.22px"> </span><span style="letter-spacing:0.13px">L</span><span style="letter-spacing:0.76px">ibrary</span><span style="letter-spacing:0.22px"> </span><span style="letter-spacing:0.15px">V</span><span style="letter-spacing:0.73px">ulnerability</span><span style="letter-spacing:0.25px"> (</span><span style="letter-spacing:-0.58px">HIGH</span><span style="letter-spacing:0.27px">)</span></span>
<span class="t" style="left:1538.80px;top:128px;font-size:14px;line-height:16px;color:#73737d;-webkit-text-stroke:0.35px #73737d;"><span style="letter-spacing:0.05px">E</span><span style="letter-spacing:0.65px">ffective</span><span style="letter-spacing:0.18px"> </span><span style="letter-spacing:0.04px">L</span><span style="letter-spacing:0.69px">ibrary</span><span style="letter-spacing:0.18px"> </span><span style="letter-spacing:0.05px">V</span><span style="letter-spacing:0.66px">ulnerability</span></span>
<svg class="a" style="left:0;top:0" width="1810" height="834"><path d="M1428.10 231.70A83 83 0 0 1 1277.95 280.49L1311.93 255.80A41 41 0 0 0 1386.10 231.70Z" fill="#d0260f"/><path d="M1277.95 280.49A83 83 0 0 1 1412.25 182.91L1378.27 207.60A41 41 0 0 0 1311.93 255.80Z" fill="#f5a11c"/><path d="M1412.25 182.91A83 83 0 0 1 1428.10 231.70L1386.10 231.70A41 41 0 0 0 1378.27 207.60Z" fill="#ffe000"/></svg>
<div class="a" style="left:1258px;top:326px;width:12px;height:12px;background:#d0260f;"></div>
<span class="t" style="left:1277.30px;top:327px;font-size:10px;line-height:11px;color:#7c7c7c;"><span style="letter-spacing:-0.45px">H</span><span style="letter-spacing:0.19px">igh</span></span>
<div class="a" style="left:1319px;top:326px;width:12px;height:12px;background:#f5a11c;"></div>
<span class="t" style="left:1338.80px;top:327px;font-size:10px;line-height:11px;color:#7c7c7c;"><span style="letter-spacing:-0.57px">M</span><span style="letter-spacing:0.2px">edium</span></span>
<div class="a" style="left:1395px;top:326px;width:12px;height:12px;background:#ffe000;"></div>
<span class="t" style="left:1414.60px;top:327px;font-size:10px;line-height:11px;color:#7c7c7c;"><span style="letter-spacing:-0.81px">L</span><span style="letter-spacing:-0.32px">ow</span></span>
<div class="a" style="left:1513px;top:166px;width:267px;height:1px;background:#d9d9d9;"></div>
<div class="a" style="left:1513px;top:210px;width:267px;height:1px;background:#d9d9d9;"></div>
<div class="a" style="left:1513px;top:258px;width:267px;height:1px;background:#d9d9d9;"></div>
<div class="a" style="left:1513px;top:302px;width:267px;height:1px;background:#d9d9d9;"></div>
<span class="t" style="left:1495.70px;top:159.5px;font-size:12px;line-height:14px;color:#808080;">4</span>
<span class="t" style="left:1495.70px;top:203.5px;font-size:12px;line-height:14px;color:#808080;">3</span>
<span class="t" style="left:1495.70px;top:251.5px;font-size:12px;line-height:14px;color:#808080;">1</span>
<span class="t" style="left:1495.70px;top:295.5px;font-size:12px;line-height:14px;color:#808080;">0</span>
<div class="a" style="left:1522px;top:258px;width:47px;height:44px;background:#d0260f;"></div>
<div class="a" style="left:1589px;top:258px;width:47px;height:44px;background:#f5a11c;"></div>
<div class="a" style="left:1589px;top:210px;width:47px;height:48px;background:#d0260f;"></div>
<div class="a" style="left:1723px;top:258px;width:47px;height:44px;background:#ffe000;"></div>
<div class="a" style="left:1723px;top:210px;width:47px;height:48px;background:#f5a11c;"></div>
<div class="a" style="left:1723px;top:166px;width:47px;height:44px;background:#d0260f;"></div>
<svg class="a" style="left:0;top:0;overflow:hidden" width="1780.5" height="834"><path d="M1513 236.5Q1519 233.3 1525 236.5Q1531 239.7 1537 236.5Q1543 233.3 1549 236.5Q1555 239.7 1561 236.5Q1567 233.3 1573 236.5Q1579 239.7 1585 236.5Q1591 233.3 1597 236.5Q1603 239.7 1609 236.5Q1615 233.3 1621 236.5Q1627 239.7 1633 236.5Q1639 233.3 1645 236.5Q1651 239.7 1657 236.5Q1663 233.3 1669 236.5Q1675 239.7 1681 236.5Q1687 233.3 1693 236.5Q1699 239.7 1705 236.5Q1711 233.3 1717 236.5Q1723 239.7 1729 236.5Q1735 233.3 1741 236.5Q1747 239.7 1753 236.5Q1759 233.3 1765 236.5Q1771 239.7 1777 236.5Q1783 233.3 1789 236.5" stroke="#fff" stroke-width="6" fill="none"/><path d="M1513 234Q1519 230.8 1525 234Q1531 237.2 1537 234Q1543 230.8 1549 234Q1555 237.2 1561 234Q1567 230.8 1573 234Q1579 237.2 1585 234Q1591 230.8 1597 234Q1603 237.2 1609 234Q1615 230.8 1621 234Q1627 237.2 1633 234Q1639 230.8 1645 234Q1651 237.2 1657 234Q1663 230.8 1669 234Q1675 237.2 1681 234Q1687 230.8 1693 234Q1699 237.2 1705 234Q1711 230.8 1717 234Q1723 237.2 1729 234Q1735 230.8 1741 234Q1747 237.2 1753 234Q1759 230.8 1765 234Q1771 237.2 1777 234Q1783 230.8 1789 234" stroke="#bcbcbc" stroke-width="1.1" fill="none"/><path d="M1513 239Q1519 235.8 1525 239Q1531 242.2 1537 239Q1543 235.8 1549 239Q1555 242.2 1561 239Q1567 235.8 1573 239Q1579 242.2 1585 239Q1591 235.8 1597 239Q1603 242.2 1609 239Q1615 235.8 1621 239Q1627 242.2 1633 239Q1639 235.8 1645 239Q1651 242.2 1657 239Q1663 235.8 1669 239Q1675 242.2 1681 239Q1687 235.8 1693 239Q1699 242.2 1705 239Q1711 235.8 1717 239Q1723 242.2 1729 239Q1735 235.8 1741 239Q1747 242.2 1753 239Q1759 235.8 1765 239Q1771 242.2 1777 239Q1783 235.8 1789 239" stroke="#bcbcbc" stroke-width="1.1" fill="none"/></svg>
<svg class="a" style="left:1540.2px;top:314.4px" width="22.8" height="26.5" viewBox="0 0 16 18.4"><defs><linearGradient id="gr1540314" x1="0" x2="1" y1="0" y2="0"><stop offset="0.5" stop-color="#e8222f"/><stop offset="0.5" stop-color="#c01924"/></linearGradient></defs><path d="M8 0.9C9.9 2.4 12.4 3.1 15.1 3.1L15.1 8.6C15.1 13 11.6 16.1 8 17.6C4.4 16.1 0.9 13 0.9 8.6L0.9 3.1C3.6 3.1 6.1 2.4 8 0.9Z" fill="url(#gr1540314)" stroke="#303030" stroke-width="1.5" stroke-linejoin="round"/><path d="M5.4 6.3L10.6 11.5M10.6 6.3L5.4 11.5" stroke="#fff" stroke-width="2.1" fill="none"/></svg>
<svg class="a" style="left:1605px;top:314.4px" width="22.8" height="26.5" viewBox="0 0 16 18.4"><defs><linearGradient id="gy1605314" x1="0" x2="1" y1="0" y2="0"><stop offset="0.5" stop-color="#fdbb22"/><stop offset="0.5" stop-color="#efa01b"/></linearGradient></defs><path d="M8 0.9C9.9 2.4 12.4 3.1 15.1 3.1L15.1 8.6C15.1 13 11.6 16.1 8 17.6C4.4 16.1 0.9 13 0.9 8.6L0.9 3.1C3.6 3.1 6.1 2.4 8 0.9Z" fill="url(#gy1605314)" stroke="#303030" stroke-width="1.5" stroke-linejoin="round"/><text x="8" y="13.6" font-family="Liberation Sans,sans-serif" font-weight="bold" font-size="12.5" fill="#fff" stroke="#fff" stroke-width="0.3" text-anchor="middle">?</text></svg>
<svg class="a" style="left:1671.6px;top:314.5px" width="21.6" height="24.2" viewBox="0 0 16 18.4"><defs><linearGradient id="gk1671314" x1="0" x2="1" y1="0" y2="0"><stop offset="0.5" stop-color="#858585"/><stop offset="0.5" stop-color="#2e2e2e"/></linearGradient><linearGradient id="gk1671314s" x1="0" x2="1" y1="0" y2="0"><stop offset="0.5" stop-color="#666"/><stop offset="0.5" stop-color="#0c0c0c"/></linearGradient></defs><path d="M8 0.9C9.9 2.4 12.4 3.1 15.1 3.1L15.1 8.6C15.1 13 11.6 16.1 8 17.6C4.4 16.1 0.9 13 0.9 8.6L0.9 3.1C3.6 3.1 6.1 2.4 8 0.9Z" fill="url(#gk1671314)" stroke="url(#gk1671314s)" stroke-width="1.5" stroke-linejoin="round"/><text x="7" y="12.6" font-family="Liberation Sans,sans-serif" font-weight="bold" font-size="11.5" fill="#fff" stroke="#fff" stroke-width="0.3" text-anchor="middle">?</text></svg>
<svg class="a" style="left:1736px;top:314.4px" width="22.8" height="26.5" viewBox="0 0 16 18.4"><defs><linearGradient id="gg1736314" x1="0" x2="1" y1="0" y2="0"><stop offset="0.5" stop-color="#18b257"/><stop offset="0.5" stop-color="#0d9442"/></linearGradient></defs><path d="M8 0.9C9.9 2.4 12.4 3.1 15.1 3.1L15.1 8.6C15.1 13 11.6 16.1 8 17.6C4.4 16.1 0.9 13 0.9 8.6L0.9 3.1C3.6 3.1 6.1 2.4 8 0.9Z" fill="url(#gg1736314)" stroke="#303030" stroke-width="1.5" stroke-linejoin="round"/><path d="M4.7 9.1L7.2 11.7L11.6 6.2" stroke="#fff" stroke-width="2.1" fill="none"/></svg>
<svg class="a" style="left:1683.7px;top:328.2px" width="14" height="14" viewBox="-7 -7 14 14"><circle r="6.6" fill="#fff"/><path d="M3.6 -2.3A4.25 4.25 0 1 0 4.2 0.9" stroke="#1a1a1a" stroke-width="1.5" fill="none"/><path d="M1.6 -2.0L5.2 -3.6L5.0 0.3Z" fill="#1a1a1a"/></svg>
<span class="t" style="left:1205.40px;top:356px;font-size:10px;line-height:11px;color:#666;">L<span style="letter-spacing:0.47px">ibrary</span><span style="letter-spacing:0.11px"> </span>S<span style="letter-spacing:0.41px">tatistics</span></span>
<span class="t" style="left:1495.10px;top:356px;font-size:10px;line-height:11px;color:#666;"><span style="letter-spacing:-0.18px">A</span><span style="letter-spacing:0.36px">nalysis</span><span style="letter-spacing:0.04px"> </span><span style="letter-spacing:-0.18px">S</span><span style="letter-spacing:0.31px">tatistics</span></span>
<div class="a" style="left:1204px;top:371px;width:70px;height:43px;background:#d7dce7;border:1px solid #d2d8e3;"></div>
<div class="a" style="left:1276px;top:371px;width:127px;height:43px;background:#d7dce7;border:1px solid #d2d8e3;"></div>
<div class="a" style="left:1405px;top:371px;width:81px;height:43px;background:#d7dce7;border:1px solid #d2d8e3;"></div>
<div class="a" style="left:1494px;top:371px;width:89px;height:43px;background:#d7dce7;border:1px solid #d2d8e3;"></div>
<div class="a" style="left:1585px;top:371px;width:127px;height:43px;background:#d7dce7;border:1px solid #d2d8e3;"></div>
<div class="a" style="left:1714px;top:371px;width:67px;height:43px;background:#d7dce7;border:1px solid #d2d8e3;"></div>
<span class="t" style="left:1229.90px;top:376.5px;font-size:16px;line-height:17px;color:#222;"><span style="letter-spacing:0.2px">22</span></span>
<span class="t" style="left:1218.60px;top:397px;font-size:10px;line-height:11px;color:#222;transform:scaleX(0.93);transform-origin:0 0;"><span style="letter-spacing:-0.18px">O</span><span style="letter-spacing:0.41px">utdated</span></span>
<span class="t" style="left:1334.95px;top:376.5px;font-size:16px;line-height:17px;color:#222;">6</span>
<span class="t" style="left:1289.70px;top:397px;font-size:10px;line-height:11px;color:#222;transform:scaleX(0.93);transform-origin:0 0;"><span style="letter-spacing:-0.22px">O</span><span style="letter-spacing:0.38px">utdated</span><span style="letter-spacing:0.04px"> &amp; </span><span style="letter-spacing:-0.19px">V</span><span style="letter-spacing:0.37px">ulnerable</span></span>
<span class="t" style="left:1437.10px;top:376.5px;font-size:16px;line-height:17px;color:#222;"><span style="letter-spacing:-0.5px">10</span></span>
<span class="t" style="left:1422.10px;top:397px;font-size:10px;line-height:11px;color:#222;transform:scaleX(0.93);transform-origin:0 0;"><span style="letter-spacing:-0.27px">V</span><span style="letter-spacing:0.31px">ulnerable</span></span>
<span class="t" style="left:1519.05px;top:374.5px;font-size:16px;line-height:17px;color:#222;"><span style="letter-spacing:-0.34px">100</span><span style="letter-spacing:0.01px">%</span></span>
<span class="t" style="left:1499.80px;top:395px;font-size:10px;line-height:11px;color:#222;transform:scaleX(0.92);transform-origin:0 0;"><span style="letter-spacing:-0.5px">A</span><span style="letter-spacing:0.12px">nalysis</span><span style="letter-spacing:-0.1px"> </span><span style="letter-spacing:-0.54px">C</span><span style="letter-spacing:0.15px">overage</span></span>
<div class="a" style="left:1500px;top:407px;width:77px;height:5px;background:#4472c4;"></div>
<span class="t" style="left:1629.10px;top:374.5px;font-size:16px;line-height:17px;color:#222;"><span style="letter-spacing:0.91px">6</span><span style="letter-spacing:0.65px"> /</span></span>
<span class="t" style="left:1652.50px;top:375.5px;font-size:14px;line-height:16px;color:#222;"><span style="letter-spacing:-0.19px">10</span></span>
<span class="t" style="left:1593.20px;top:395px;font-size:10px;line-height:11px;color:#222;transform:scaleX(0.92);transform-origin:0 0;"><span style="letter-spacing:-0.27px">E</span><span style="letter-spacing:0.26px">ffective</span> <span style="letter-spacing:0.3px">or</span> <span style="letter-spacing:-0.29px">N</span><span style="letter-spacing:0.37px">on</span> <span style="letter-spacing:-0.27px">A</span><span style="letter-spacing:0.33px">nalyzed</span></span>
<div class="a" style="left:1591px;top:407px;width:115px;height:5px;background:#f0f0f0;"></div>
<div class="a" style="left:1591px;top:407px;width:69px;height:5px;background:#ff0000;"></div>
<span class="t" style="left:1728.10px;top:374.5px;font-size:16px;line-height:17px;color:#222;"><span style="letter-spacing:0.91px">4</span><span style="letter-spacing:0.65px"> /</span></span>
<span class="t" style="left:1751.40px;top:375.5px;font-size:14px;line-height:16px;color:#222;"><span style="letter-spacing:-0.19px">10</span></span>
<span class="t" style="left:1718.65px;top:395px;font-size:10px;line-height:11px;color:#222;transform:scaleX(0.92);transform-origin:0 0;"><span style="letter-spacing:-0.19px">N</span><span style="letter-spacing:0.46px">on</span><span style="letter-spacing:0.04px"> </span><span style="letter-spacing:-0.18px">E</span><span style="letter-spacing:0.33px">ffective</span></span>
<div class="a" style="left:1720px;top:407px;width:55px;height:5px;background:#f0f0f0;"></div>
<div class="a" style="left:1720px;top:407px;width:22px;height:5px;background:#00b050;"></div>
<span class="t" style="left:18.40px;top:480px;font-size:13px;line-height:15px;color:#2e2e2e;-webkit-text-stroke:0.25px #2e2e2e;"><span style="letter-spacing:-0.1px">C</span><span style="letter-spacing:0.57px">reation</span><span style="letter-spacing:0.11px"> </span><span style="letter-spacing:-0.1px">D</span><span style="letter-spacing:0.6px">ate</span></span>
<span class="t" style="left:225.40px;top:480px;font-size:13px;line-height:15px;color:#2a2a2a;font-weight:bold;"><span style="letter-spacing:0.06px">08</span><span style="letter-spacing:-0.09px">-</span><span style="letter-spacing:0.06px">01</span><span style="letter-spacing:-0.09px">-</span><span style="letter-spacing:0.06px">2019</span></span>
<span class="t" style="left:18.40px;top:502px;font-size:13px;line-height:15px;color:#2e2e2e;-webkit-text-stroke:0.25px #2e2e2e;"><span style="letter-spacing:-0.11px">L</span><span style="letter-spacing:0.55px">ast</span><span style="letter-spacing:0.09px"> </span><span style="letter-spacing:-0.13px">P</span><span style="letter-spacing:0.52px">lugin</span><span style="letter-spacing:0.09px"> </span><span style="letter-spacing:-0.14px">U</span><span style="letter-spacing:0.62px">pdate</span></span>
<span class="t" style="left:225.40px;top:502px;font-size:13px;line-height:15px;color:#2a2a2a;font-weight:bold;"><span style="letter-spacing:0.06px">09</span><span style="letter-spacing:-0.09px">-</span><span style="letter-spacing:0.06px">01</span><span style="letter-spacing:-0.09px">-</span><span style="letter-spacing:0.06px">2019</span></span>
<span class="t" style="left:18.40px;top:524px;font-size:13px;line-height:15px;color:#2e2e2e;-webkit-text-stroke:0.25px #2e2e2e;"><span style="letter-spacing:-0.23px">L</span><span style="letter-spacing:0.44px">ast</span><span style="letter-spacing:0.03px"> </span><span style="letter-spacing:-0.28px">S</span><span style="letter-spacing:0.53px">can</span><span style="letter-spacing:0.03px"> </span><span style="letter-spacing:-0.3px">C</span><span style="letter-spacing:0.6px">omment</span></span>
<span class="t" style="left:18.40px;top:546px;font-size:13px;line-height:15px;color:#2e2e2e;-webkit-text-stroke:0.25px #2e2e2e;"><span style="letter-spacing:-0.16px">U</span><span style="letter-spacing:0.61px">ploaded</span><span style="letter-spacing:0.08px"> </span><span style="letter-spacing:0.64px">by</span></span>
<span class="t" style="left:18.40px;top:568px;font-size:13px;line-height:15px;color:#2e2e2e;-webkit-text-stroke:0.25px #2e2e2e;"><span style="letter-spacing:-0.38px">R</span><span style="letter-spacing:0.44px">equest</span> <span style="letter-spacing:-0.32px">T</span><span style="letter-spacing:0.48px">oken</span></span>
<span class="t" style="left:225.40px;top:568px;font-size:13px;line-height:15px;color:#3f62c2;"><span style="letter-spacing:0.41px">click</span><span style="letter-spacing:0.04px"> </span><span style="letter-spacing:0.44px">to</span><span style="letter-spacing:0.04px"> </span><span style="letter-spacing:0.55px">copy</span></span>
<div class="a" style="left:17px;top:592px;width:336px;height:1px;background:#d2d2d2;"></div>
<span class="t" style="left:18.40px;top:603px;font-size:13px;line-height:15px;color:#2e2e2e;-webkit-text-stroke:0.25px #2e2e2e;"><span style="letter-spacing:-0.02px">L</span><span style="letter-spacing:0.58px">ibraries</span></span>
<span class="t" style="left:225.40px;top:603px;font-size:13px;line-height:15px;color:#2a2a2a;font-weight:bold;"><span style="letter-spacing:-0.06px">132</span></span>
<span class="t" style="left:18.40px;top:625px;font-size:13px;line-height:15px;color:#2e2e2e;-webkit-text-stroke:0.25px #2e2e2e;"><span style="letter-spacing:-0.09px">I</span><span style="letter-spacing:0.61px">n</span><span style="letter-spacing:0.07px">-</span><span style="letter-spacing:-0.23px">H</span><span style="letter-spacing:0.6px">ouse</span></span>
<span class="t" style="left:225.40px;top:625px;font-size:13px;line-height:15px;color:#2a2a2a;font-weight:bold;">0</span>
<span class="t" style="left:18.40px;top:647px;font-size:13px;line-height:15px;color:#2e2e2e;-webkit-text-stroke:0.25px #2e2e2e;"><span style="letter-spacing:-0.42px">L</span><span style="letter-spacing:0.3px">icense</span><span style="letter-spacing:-0.07px"> </span><span style="letter-spacing:-0.46px">T</span><span style="letter-spacing:0.33px">ypes</span></span>
<span class="t" style="left:225.40px;top:647px;font-size:13px;line-height:15px;color:#2a2a2a;font-weight:bold;"><span style="letter-spacing:-0.08px">15</span></span>
<div class="a" style="left:17px;top:671px;width:336px;height:1px;background:#d2d2d2;"></div>
<span class="t" style="left:18.40px;top:682px;font-size:13px;line-height:15px;color:#2e2e2e;-webkit-text-stroke:0.25px #2e2e2e;"><span style="letter-spacing:-0.42px">O</span><span style="letter-spacing:0.48px">pen</span><span style="letter-spacing:-0.01px"> </span><span style="letter-spacing:-0.39px">R</span><span style="letter-spacing:0.43px">equests</span></span>
<span class="t" style="left:225.40px;top:682px;font-size:13px;line-height:15px;color:#2a2a2a;font-weight:bold;">0</span>
<span class="t" style="left:18.40px;top:704px;font-size:13px;line-height:15px;color:#2e2e2e;-webkit-text-stroke:0.25px #2e2e2e;"><span style="letter-spacing:-0.1px">L</span><span style="letter-spacing:0.53px">ifetime</span><span style="letter-spacing:0.09px"> </span><span style="letter-spacing:-0.13px">R</span><span style="letter-spacing:0.63px">equests</span></span>
<span class="t" style="left:225.40px;top:704px;font-size:13px;line-height:15px;color:#2a2a2a;font-weight:bold;">0</span>
<div class="a" style="left:17px;top:728px;width:336px;height:1px;background:#d2d2d2;"></div>
<span class="t" style="left:18.40px;top:739px;font-size:13px;line-height:15px;color:#2e2e2e;-webkit-text-stroke:0.25px #2e2e2e;">T<span style="letter-spacing:0.59px">otal</span><span style="letter-spacing:0.15px"> </span>A<span style="letter-spacing:0.55px">lerts</span></span>
<span class="t" style="left:225.40px;top:739px;font-size:13px;line-height:15px;color:#2a2a2a;font-weight:bold;"><span style="letter-spacing:0.17px">44</span></span>
<div class="a" style="left:17px;top:763px;width:336px;height:1px;background:#d2d2d2;"></div>
<span class="t" style="left:18.40px;top:775.7px;font-size:13px;line-height:15px;color:#2e2e2e;-webkit-text-stroke:0.25px #2e2e2e;"><span style="letter-spacing:-0.11px">U</span><span style="letter-spacing:0.72px">p</span><span style="letter-spacing:0.12px">-</span><span style="letter-spacing:-0.09px">T</span><span style="letter-spacing:0.72px">o</span><span style="letter-spacing:0.12px">-</span><span style="letter-spacing:-0.11px">D</span><span style="letter-spacing:0.6px">ate</span><span style="letter-spacing:0.1px"> </span><span style="letter-spacing:-0.08px">L</span><span style="letter-spacing:0.53px">ibraries</span></span>
<div class="a" style="left:151px;top:774px;width:16px;height:16px;background:#3f66c4;border-radius:2.5px;border:1.5px solid #23418f;"></div>
<span class="t" style="left:155.30px;top:775px;font-size:13px;line-height:15px;color:#fff;font-weight:bold;-webkit-text-stroke:0.6px #fff;">?</span>
<div class="a" style="left:18px;top:797px;width:276px;height:19px;background:#76a122;border:1px solid #6f9a1f;"></div>
<div class="a" style="left:295px;top:797px;width:51px;height:19px;background:#d0260f;border:1px solid #d42205;"></div>
<span class="t" style="left:145.50px;top:801px;font-size:12px;line-height:14px;color:#fff;font-weight:bold;"><span style="letter-spacing:-0.49px">Y</span><span style="letter-spacing:-0.03px">es</span></span>
<span class="t" style="left:311.10px;top:801px;font-size:12px;line-height:14px;color:#fff;font-weight:bold;"><span style="letter-spacing:0.5px">N</span><span style="letter-spacing:0.9px">o</span></span>
<div class="a" style="left:873px;top:440px;width:138px;height:25px;background:#3f66c4;border:1px solid #3457b3;"></div>
<span class="t" style="left:884.00px;top:445.2px;font-size:13px;line-height:15px;color:#fff;font-weight:bold;"><span style="letter-spacing:-0.41px">S</span><span style="letter-spacing:0.09px">how</span><span style="letter-spacing:-0.21px"> </span><span style="letter-spacing:0.08px">as</span><span style="letter-spacing:-0.21px"> </span><span style="letter-spacing:-0.45px">H</span><span style="letter-spacing:0.07px">ierarchy</span></span>
<span class="t" style="left:1028.50px;top:445px;font-size:14px;line-height:16px;color:#3f62c2;"><span style="letter-spacing:-0.19px">A</span><span style="letter-spacing:0.55px">ctions</span></span>
<span class="t" style="left:1102.70px;top:445px;font-size:14px;line-height:16px;color:#3f62c2;"><span style="letter-spacing:-0.08px">E</span><span style="letter-spacing:0.64px">xport</span></span>
<div class="a" style="left:384px;top:479px;width:12px;height:12px;border:1px solid #a6a6a6;border-radius:2px;background:linear-gradient(#f1f1f1,#d9d9d9);box-shadow:0 1px 1px rgba(0,0,0,.12);"></div>
<span class="t" style="left:434.50px;top:479px;font-size:12px;line-height:14px;color:#333;-webkit-text-stroke:0.25px #333;"><span style="letter-spacing:-0.03px">L</span><span style="letter-spacing:0.54px">ibrary</span><span style="letter-spacing:0.12px"> </span><span style="letter-spacing:-0.04px">N</span><span style="letter-spacing:0.83px">ame</span></span>
<span class="t" style="left:615.20px;top:479px;font-size:12px;line-height:14px;color:#333;-webkit-text-stroke:0.25px #333;"><span style="letter-spacing:0.03px">D</span><span style="letter-spacing:0.59px">escription</span></span>
<span class="t" style="left:796.40px;top:479px;font-size:12px;line-height:14px;color:#333;-webkit-text-stroke:0.25px #333;"><span style="letter-spacing:-0.47px">L</span><span style="letter-spacing:0.2px">icenses</span></span>
<span class="t" style="left:978.60px;top:479px;font-size:12px;line-height:14px;color:#333;-webkit-text-stroke:0.25px #333;"><span style="letter-spacing:-0.09px">L</span><span style="letter-spacing:0.5px">ink</span><span style="letter-spacing:0.09px"> </span><span style="letter-spacing:0.49px">to</span><span style="letter-spacing:0.09px"> </span><span style="letter-spacing:-0.76px">RTC</span></span>
<div class="clip" style="left:374px;top:497px;width:790px;height:296px">
<div class="a" style="left:5px;top:22px;width:23px;height:1px;background:#d2d2d2;"></div>
<div class="a" style="left:29px;top:22px;width:29px;height:1px;background:#d2d2d2;"></div>
<div class="a" style="left:59px;top:22px;width:180px;height:1px;background:#d2d2d2;"></div>
<div class="a" style="left:240px;top:22px;width:180px;height:1px;background:#d2d2d2;"></div>
<div class="a" style="left:421px;top:22px;width:181px;height:1px;background:#d2d2d2;"></div>
<div class="a" style="left:603px;top:22px;width:182px;height:1px;background:#d2d2d2;"></div>
<div class="a" style="left:10px;top:4px;width:12px;height:12px;border:1px solid #a6a6a6;border-radius:2px;background:linear-gradient(#f1f1f1,#d9d9d9);box-shadow:0 1px 1px rgba(0,0,0,.12);"></div>
<span class="t" style="left:60.40px;top:4px;font-size:11px;line-height:12px;color:#3f62c2;-webkit-text-stroke:0.3px #3f62c2;"><span style="letter-spacing:0.45px">client</span><span style="letter-spacing:0.13px">-</span><span style="letter-spacing:0.54px">side</span><span style="letter-spacing:0.13px">-</span><span style="letter-spacing:0.42px">filtering</span><span style="letter-spacing:0.13px">-</span><span style="letter-spacing:0.58px">v</span><span style="letter-spacing:-0.03px">8</span><span style="letter-spacing:0.11px">.</span><span style="letter-spacing:-0.03px">0</span><span style="letter-spacing:0.11px">.</span><span style="letter-spacing:-0.03px">0</span><span style="letter-spacing:0.11px">.</span><span style="letter-spacing:-0.12px;font-size:10.23px">SNAP</span><span style="letter-spacing:0.39px">…</span></span>
<span class="t" style="left:422.50px;top:5px;font-size:11px;line-height:12px;color:#2a2a2a;-webkit-text-stroke:0.3px #2a2a2a;"><span style="letter-spacing:-0.33px">R</span><span style="letter-spacing:0.34px">equires</span><span style="letter-spacing:-0.01px"> </span><span style="letter-spacing:-0.33px">R</span><span style="letter-spacing:0.37px">eview</span></span>
<div class="a" style="left:5px;top:46px;width:23px;height:1px;background:#d2d2d2;"></div>
<div class="a" style="left:29px;top:46px;width:29px;height:1px;background:#d2d2d2;"></div>
<div class="a" style="left:59px;top:46px;width:180px;height:1px;background:#d2d2d2;"></div>
<div class="a" style="left:240px;top:46px;width:180px;height:1px;background:#d2d2d2;"></div>
<div class="a" style="left:421px;top:46px;width:181px;height:1px;background:#d2d2d2;"></div>
<div class="a" style="left:603px;top:46px;width:182px;height:1px;background:#d2d2d2;"></div>
<div class="a" style="left:10px;top:28px;width:12px;height:12px;border:1px solid #a6a6a6;border-radius:2px;background:linear-gradient(#f1f1f1,#d9d9d9);box-shadow:0 1px 1px rgba(0,0,0,.12);"></div>
<span class="t" style="left:60.40px;top:28px;font-size:11px;line-height:12px;color:#3f62c2;-webkit-text-stroke:0.3px #3f62c2;"><span style="letter-spacing:0.59px">bootstrap</span><span style="letter-spacing:0.16px">-</span><span style="letter-spacing:0.02px">3</span><span style="letter-spacing:0.14px">.</span><span style="letter-spacing:0.02px">1</span><span style="letter-spacing:0.14px">.</span><span style="letter-spacing:0.02px">1</span><span style="letter-spacing:0.16px">-</span><span style="letter-spacing:0.02px">3</span><span style="letter-spacing:0.14px">.</span><span style="letter-spacing:0.02px">2</span><span style="letter-spacing:0.14px">.</span><span style="letter-spacing:0.02px">1</span><span style="letter-spacing:0.14px">.</span><span style="letter-spacing:0.69px">min</span><span style="letter-spacing:0.14px">.</span><span style="letter-spacing:0.46px">js</span></span>
<span class="t" style="left:241.30px;top:29px;font-size:11px;line-height:12px;color:#2a2a2a;-webkit-text-stroke:0.3px #2a2a2a;"><span style="letter-spacing:-0.12px">G</span><span style="letter-spacing:0.52px">oogle</span><span style="letter-spacing:0.1px">-</span><span style="letter-spacing:0.46px">styled</span><span style="letter-spacing:0.08px"> </span><span style="letter-spacing:0.59px">theme</span><span style="letter-spacing:0.08px"> </span><span style="letter-spacing:0.41px">for</span><span style="letter-spacing:0.08px"> </span><span style="letter-spacing:-0.1px">B</span><span style="letter-spacing:0.46px">ootst</span><span style="letter-spacing:0.29px">…</span></span>
<span class="t" style="left:422.50px;top:29px;font-size:11px;line-height:12px;color:#2a2a2a;-webkit-text-stroke:0.3px #2a2a2a;"><span style="letter-spacing:0.15px">MIT</span></span>
<div class="a" style="left:5px;top:70px;width:23px;height:1px;background:#d2d2d2;"></div>
<div class="a" style="left:29px;top:70px;width:29px;height:1px;background:#d2d2d2;"></div>
<div class="a" style="left:59px;top:70px;width:180px;height:1px;background:#d2d2d2;"></div>
<div class="a" style="left:240px;top:70px;width:180px;height:1px;background:#d2d2d2;"></div>
<div class="a" style="left:421px;top:70px;width:181px;height:1px;background:#d2d2d2;"></div>
<div class="a" style="left:603px;top:70px;width:182px;height:1px;background:#d2d2d2;"></div>
<div class="a" style="left:10px;top:52px;width:12px;height:12px;border:1px solid #a6a6a6;border-radius:2px;background:linear-gradient(#f1f1f1,#d9d9d9);box-shadow:0 1px 1px rgba(0,0,0,.12);"></div>
<span class="t" style="left:60.40px;top:52px;font-size:11px;line-height:12px;color:#3f62c2;-webkit-text-stroke:0.3px #3f62c2;"><span style="letter-spacing:0.47px">spring</span><span style="letter-spacing:0.09px">-</span><span style="letter-spacing:0.5px">boot</span><span style="letter-spacing:0.09px">-</span><span style="letter-spacing:0.42px">starter</span><span style="letter-spacing:0.09px">-</span><span style="letter-spacing:-0.1px">1</span><span style="letter-spacing:0.07px">.</span><span style="letter-spacing:-0.1px">5</span><span style="letter-spacing:0.07px">.</span><span style="letter-spacing:-0.1px">12</span><span style="letter-spacing:0.07px">.</span><span style="letter-spacing:-0.19px;font-size:10.23px">RELE</span><span style="letter-spacing:0.26px">…</span></span>
<span class="t" style="left:241.30px;top:53px;font-size:11px;line-height:12px;color:#2a2a2a;-webkit-text-stroke:0.3px #2a2a2a;"><span style="letter-spacing:-0.17px">C</span><span style="letter-spacing:0.47px">ore</span><span style="letter-spacing:0.06px"> </span><span style="letter-spacing:0.39px">starter</span><span style="letter-spacing:0.06px">, </span><span style="letter-spacing:0.43px">including</span><span style="letter-spacing:0.06px"> </span><span style="letter-spacing:0.47px">auto</span><span style="letter-spacing:0.07px">-</span><span style="letter-spacing:0.52px">con</span><span style="letter-spacing:0.21px">…</span></span>
<span class="t" style="left:422.50px;top:53px;font-size:11px;line-height:12px;color:#2a2a2a;-webkit-text-stroke:0.3px #2a2a2a;"><span style="letter-spacing:-0.32px">A</span><span style="letter-spacing:0.38px">pache</span><span style="letter-spacing:-0.01px"> </span><span style="letter-spacing:-0.27px">2</span><span style="letter-spacing:-0.01px">.</span><span style="letter-spacing:-0.27px">0</span></span>
<div class="a" style="left:5px;top:94px;width:23px;height:1px;background:#d2d2d2;"></div>
<div class="a" style="left:29px;top:94px;width:29px;height:1px;background:#d2d2d2;"></div>
<div class="a" style="left:59px;top:94px;width:180px;height:1px;background:#d2d2d2;"></div>
<div class="a" style="left:240px;top:94px;width:180px;height:1px;background:#d2d2d2;"></div>
<div class="a" style="left:421px;top:94px;width:181px;height:1px;background:#d2d2d2;"></div>
<div class="a" style="left:603px;top:94px;width:182px;height:1px;background:#d2d2d2;"></div>
<div class="a" style="left:10px;top:76px;width:12px;height:12px;border:1px solid #a6a6a6;border-radius:2px;background:linear-gradient(#f1f1f1,#d9d9d9);box-shadow:0 1px 1px rgba(0,0,0,.12);"></div>
<span class="t" style="left:60.40px;top:76px;font-size:11px;line-height:12px;color:#3f62c2;-webkit-text-stroke:0.3px #3f62c2;"><span style="letter-spacing:0.5px">spring</span><span style="letter-spacing:0.11px">-</span><span style="letter-spacing:0.63px">orm</span><span style="letter-spacing:0.11px">-</span><span style="letter-spacing:-0.07px">4</span><span style="letter-spacing:0.09px">.</span><span style="letter-spacing:-0.07px">3</span><span style="letter-spacing:0.09px">.</span><span style="letter-spacing:-0.07px">16</span><span style="letter-spacing:0.09px">.</span><span style="letter-spacing:-0.16px;font-size:10.23px">RELEASE</span><span style="letter-spacing:0.09px">.</span><span style="letter-spacing:0.41px">jar</span></span>
<span class="t" style="left:241.30px;top:77px;font-size:11px;line-height:12px;color:#2a2a2a;-webkit-text-stroke:0.3px #2a2a2a;"><span style="letter-spacing:-0.08px">S</span><span style="letter-spacing:0.49px">pring</span><span style="letter-spacing:0.09px"> </span><span style="letter-spacing:-0.09px">O</span><span style="letter-spacing:0.47px">bject</span><span style="letter-spacing:0.09px">/</span><span style="letter-spacing:-0.08px">R</span><span style="letter-spacing:0.46px">elational</span><span style="letter-spacing:0.09px"> </span><span style="letter-spacing:-0.1px">M</span><span style="letter-spacing:0.52px">appi</span><span style="letter-spacing:0.33px">…</span></span>
<span class="t" style="left:422.50px;top:77px;font-size:11px;line-height:12px;color:#2a2a2a;-webkit-text-stroke:0.3px #2a2a2a;"><span style="letter-spacing:-0.32px">A</span><span style="letter-spacing:0.38px">pache</span><span style="letter-spacing:-0.01px"> </span><span style="letter-spacing:-0.27px">2</span><span style="letter-spacing:-0.01px">.</span><span style="letter-spacing:-0.27px">0</span></span>
<div class="a" style="left:5px;top:118px;width:23px;height:1px;background:#d2d2d2;"></div>
<div class="a" style="left:29px;top:118px;width:29px;height:1px;background:#d2d2d2;"></div>
<div class="a" style="left:59px;top:118px;width:180px;height:1px;background:#d2d2d2;"></div>
<div class="a" style="left:240px;top:118px;width:180px;height:1px;background:#d2d2d2;"></div>
<div class="a" style="left:421px;top:118px;width:181px;height:1px;background:#d2d2d2;"></div>
<div class="a" style="left:603px;top:118px;width:182px;height:1px;background:#d2d2d2;"></div>
<div class="a" style="left:10px;top:100px;width:12px;height:12px;border:1px solid #a6a6a6;border-radius:2px;background:linear-gradient(#f1f1f1,#d9d9d9);box-shadow:0 1px 1px rgba(0,0,0,.12);"></div>
<span class="t" style="left:60.40px;top:100px;font-size:11px;line-height:12px;color:#3f62c2;-webkit-text-stroke:0.3px #3f62c2;"><span style="letter-spacing:0.65px">tomcat</span><span style="letter-spacing:0.17px">-</span><span style="letter-spacing:0.61px">annotations</span><span style="letter-spacing:0.17px">-</span><span style="letter-spacing:0.58px">api</span><span style="letter-spacing:0.17px">-</span><span style="letter-spacing:0.03px">8</span><span style="letter-spacing:0.14px">.</span><span style="letter-spacing:0.03px">5</span><span style="letter-spacing:0.14px">.</span><span style="letter-spacing:0.03px">29</span><span style="letter-spacing:0.14px">.</span><span style="letter-spacing:0.48px">jar</span></span>
<span class="t" style="left:241.30px;top:101px;font-size:11px;line-height:12px;color:#2a2a2a;-webkit-text-stroke:0.3px #2a2a2a;"><span style="letter-spacing:-0.16px">A</span><span style="letter-spacing:0.45px">nnotations</span><span style="letter-spacing:0.06px"> </span><span style="letter-spacing:-0.16px">P</span><span style="letter-spacing:0.52px">ackage</span></span>
<span class="t" style="left:422.50px;top:101px;font-size:11px;line-height:12px;color:#2a2a2a;-webkit-text-stroke:0.3px #2a2a2a;"><span style="letter-spacing:-0.32px">A</span><span style="letter-spacing:0.38px">pache</span><span style="letter-spacing:-0.01px"> </span><span style="letter-spacing:-0.27px">2</span><span style="letter-spacing:-0.01px">.</span><span style="letter-spacing:-0.27px">0</span></span>
<div class="a" style="left:5px;top:142px;width:23px;height:1px;background:#d2d2d2;"></div>
<div class="a" style="left:29px;top:142px;width:29px;height:1px;background:#d2d2d2;"></div>
<div class="a" style="left:59px;top:142px;width:180px;height:1px;background:#d2d2d2;"></div>
<div class="a" style="left:240px;top:142px;width:180px;height:1px;background:#d2d2d2;"></div>
<div class="a" style="left:421px;top:142px;width:181px;height:1px;background:#d2d2d2;"></div>
<div class="a" style="left:603px;top:142px;width:182px;height:1px;background:#d2d2d2;"></div>
<div class="a" style="left:10px;top:124px;width:12px;height:12px;border:1px solid #a6a6a6;border-radius:2px;background:linear-gradient(#f1f1f1,#d9d9d9);box-shadow:0 1px 1px rgba(0,0,0,.12);"></div>
<span class="t" style="left:60.40px;top:124px;font-size:11px;line-height:12px;color:#3f62c2;-webkit-text-stroke:0.3px #3f62c2;"><span style="letter-spacing:0.42px">slf</span><span style="letter-spacing:0.02px">4</span><span style="letter-spacing:0.28px">j</span><span style="letter-spacing:0.16px">-</span><span style="letter-spacing:0.56px">api</span><span style="letter-spacing:0.16px">-</span><span style="letter-spacing:0.02px">1</span><span style="letter-spacing:0.13px">.</span><span style="letter-spacing:0.02px">7</span><span style="letter-spacing:0.13px">.</span><span style="letter-spacing:0.02px">25</span><span style="letter-spacing:0.13px">.</span><span style="letter-spacing:0.47px">jar</span></span>
<span class="t" style="left:241.30px;top:125px;font-size:11px;line-height:12px;color:#2a2a2a;-webkit-text-stroke:0.3px #2a2a2a;"><span style="letter-spacing:-0.04px">T</span><span style="letter-spacing:0.65px">he</span><span style="letter-spacing:0.11px"> </span><span style="letter-spacing:0.39px">slf</span><span style="letter-spacing:-0.03px">4</span><span style="letter-spacing:0.26px">j</span><span style="letter-spacing:0.11px"> </span><span style="letter-spacing:-0.51px">API</span></span>
<span class="t" style="left:422.50px;top:125px;font-size:11px;line-height:12px;color:#2a2a2a;-webkit-text-stroke:0.3px #2a2a2a;"><span style="letter-spacing:0.15px">MIT</span></span>
<div class="a" style="left:5px;top:166px;width:23px;height:1px;background:#d2d2d2;"></div>
<div class="a" style="left:29px;top:166px;width:29px;height:1px;background:#d2d2d2;"></div>
<div class="a" style="left:59px;top:166px;width:180px;height:1px;background:#d2d2d2;"></div>
<div class="a" style="left:240px;top:166px;width:180px;height:1px;background:#d2d2d2;"></div>
<div class="a" style="left:421px;top:166px;width:181px;height:1px;background:#d2d2d2;"></div>
<div class="a" style="left:603px;top:166px;width:182px;height:1px;background:#d2d2d2;"></div>
<div class="a" style="left:10px;top:148px;width:12px;height:12px;border:1px solid #a6a6a6;border-radius:2px;background:linear-gradient(#f1f1f1,#d9d9d9);box-shadow:0 1px 1px rgba(0,0,0,.12);"></div>
<span class="t" style="left:60.40px;top:148px;font-size:11px;line-height:12px;color:#3f62c2;-webkit-text-stroke:0.3px #3f62c2;"><span style="letter-spacing:0.54px">password</span><span style="letter-spacing:0.08px">-</span><span style="letter-spacing:0.45px">reset</span><span style="letter-spacing:0.08px">-</span><span style="letter-spacing:0.5px">v</span><span style="letter-spacing:-0.12px">8</span><span style="letter-spacing:0.06px">.</span><span style="letter-spacing:-0.12px">0</span><span style="letter-spacing:0.06px">.</span><span style="letter-spacing:-0.12px">0</span><span style="letter-spacing:0.06px">.</span><span style="letter-spacing:-0.22px;font-size:10.23px">SNAPSH</span><span style="letter-spacing:0.23px">…</span></span>
<span class="t" style="left:241.30px;top:149px;font-size:11px;line-height:12px;color:#2a2a2a;-webkit-text-stroke:0.3px #2a2a2a;"><span style="letter-spacing:0.52px">password</span><span style="letter-spacing:0.07px">-</span><span style="letter-spacing:0.43px">reset</span><span style="letter-spacing:0.07px">-</span><span style="letter-spacing:0.49px">v</span><span style="letter-spacing:-0.13px">8</span><span style="letter-spacing:0.06px">.</span><span style="letter-spacing:-0.13px">0</span><span style="letter-spacing:0.06px">.</span><span style="letter-spacing:-0.13px">0</span><span style="letter-spacing:0.06px">.</span><span style="letter-spacing:-0.23px;font-size:10.23px">SNAPSH</span><span style="letter-spacing:0.21px">…</span></span>
<span class="t" style="left:422.50px;top:149px;font-size:11px;line-height:12px;color:#2a2a2a;-webkit-text-stroke:0.3px #2a2a2a;"><span style="letter-spacing:-0.33px">R</span><span style="letter-spacing:0.34px">equires</span><span style="letter-spacing:-0.01px"> </span><span style="letter-spacing:-0.33px">R</span><span style="letter-spacing:0.37px">eview</span></span>
<div class="a" style="left:5px;top:190px;width:23px;height:1px;background:#d2d2d2;"></div>
<div class="a" style="left:29px;top:190px;width:29px;height:1px;background:#d2d2d2;"></div>
<div class="a" style="left:59px;top:190px;width:180px;height:1px;background:#d2d2d2;"></div>
<div class="a" style="left:240px;top:190px;width:180px;height:1px;background:#d2d2d2;"></div>
<div class="a" style="left:421px;top:190px;width:181px;height:1px;background:#d2d2d2;"></div>
<div class="a" style="left:603px;top:190px;width:182px;height:1px;background:#d2d2d2;"></div>
<div class="a" style="left:10px;top:172px;width:12px;height:12px;border:1px solid #a6a6a6;border-radius:2px;background:linear-gradient(#f1f1f1,#d9d9d9);box-shadow:0 1px 1px rgba(0,0,0,.12);"></div>
<span class="t" style="left:60.40px;top:172px;font-size:11px;line-height:12px;color:#3f62c2;-webkit-text-stroke:0.3px #3f62c2;"><span style="letter-spacing:0.6px">http</span><span style="letter-spacing:0.21px">-</span><span style="letter-spacing:0.66px">proxies</span><span style="letter-spacing:0.21px">-</span><span style="letter-spacing:0.72px">v</span><span style="letter-spacing:0.1px">8</span><span style="letter-spacing:0.18px">.</span><span style="letter-spacing:0.1px">0</span><span style="letter-spacing:0.18px">.</span><span style="letter-spacing:0.1px">0</span><span style="letter-spacing:0.18px">.</span><span style="letter-spacing:0.03px;font-size:10.23px">SNAPSHOT</span><span style="letter-spacing:0.18px">.</span><span style="letter-spacing:0.53px">jar</span></span>
<span class="t" style="left:422.50px;top:173px;font-size:11px;line-height:12px;color:#2a2a2a;-webkit-text-stroke:0.3px #2a2a2a;"><span style="letter-spacing:-0.33px">R</span><span style="letter-spacing:0.34px">equires</span><span style="letter-spacing:-0.01px"> </span><span style="letter-spacing:-0.33px">R</span><span style="letter-spacing:0.37px">eview</span></span>
<div class="a" style="left:5px;top:214px;width:23px;height:1px;background:#d2d2d2;"></div>
<div class="a" style="left:29px;top:214px;width:29px;height:1px;background:#d2d2d2;"></div>
<div class="a" style="left:59px;top:214px;width:180px;height:1px;background:#d2d2d2;"></div>
<div class="a" style="left:240px;top:214px;width:180px;height:1px;background:#d2d2d2;"></div>
<div class="a" style="left:421px;top:214px;width:181px;height:1px;background:#d2d2d2;"></div>
<div class="a" style="left:603px;top:214px;width:182px;height:1px;background:#d2d2d2;"></div>
<div class="a" style="left:10px;top:196px;width:12px;height:12px;border:1px solid #a6a6a6;border-radius:2px;background:linear-gradient(#f1f1f1,#d9d9d9);box-shadow:0 1px 1px rgba(0,0,0,.12);"></div>
<span class="t" style="left:60.40px;top:196px;font-size:11px;line-height:12px;color:#3f62c2;-webkit-text-stroke:0.3px #3f62c2;"><span style="letter-spacing:0.47px">thymeleaf</span><span style="letter-spacing:0.07px">-</span><span style="letter-spacing:0.44px">spring</span><span style="letter-spacing:-0.13px">4</span><span style="letter-spacing:0.07px">-</span><span style="letter-spacing:-0.13px">2</span><span style="letter-spacing:0.06px">.</span><span style="letter-spacing:-0.13px">1</span><span style="letter-spacing:0.06px">.</span><span style="letter-spacing:-0.13px">6</span><span style="letter-spacing:0.06px">.</span><span style="letter-spacing:-0.23px;font-size:10.23px">RELEAS</span><span style="letter-spacing:0.2px">…</span></span>
<span class="t" style="left:241.30px;top:197px;font-size:11px;line-height:12px;color:#2a2a2a;-webkit-text-stroke:0.3px #2a2a2a;"><span style="letter-spacing:-0.31px">XML</span><span style="letter-spacing:0.27px">/</span><span style="letter-spacing:0.22px;font-size:10.23px">XHTML</span><span style="letter-spacing:0.27px">/</span><span style="letter-spacing:0.22px;font-size:10.23px">HTML</span><span style="letter-spacing:0.27px">5</span><span style="letter-spacing:0.27px"> </span><span style="letter-spacing:0.85px">template</span><span style="letter-spacing:0.27px"> </span><span style="letter-spacing:0.99px">e</span><span style="letter-spacing:0.96px">…</span></span>
<span class="t" style="left:422.50px;top:197px;font-size:11px;line-height:12px;color:#2a2a2a;-webkit-text-stroke:0.3px #2a2a2a;"><span style="letter-spacing:-0.32px">A</span><span style="letter-spacing:0.38px">pache</span><span style="letter-spacing:-0.01px"> </span><span style="letter-spacing:-0.27px">2</span><span style="letter-spacing:-0.01px">.</span><span style="letter-spacing:-0.27px">0</span></span>
<div class="a" style="left:5px;top:238px;width:23px;height:1px;background:#d2d2d2;"></div>
<div class="a" style="left:29px;top:238px;width:29px;height:1px;background:#d2d2d2;"></div>
<div class="a" style="left:59px;top:238px;width:180px;height:1px;background:#d2d2d2;"></div>
<div class="a" style="left:240px;top:238px;width:180px;height:1px;background:#d2d2d2;"></div>
<div class="a" style="left:421px;top:238px;width:181px;height:1px;background:#d2d2d2;"></div>
<div class="a" style="left:603px;top:238px;width:182px;height:1px;background:#d2d2d2;"></div>
<div class="a" style="left:10px;top:220px;width:12px;height:12px;border:1px solid #a6a6a6;border-radius:2px;background:linear-gradient(#f1f1f1,#d9d9d9);box-shadow:0 1px 1px rgba(0,0,0,.12);"></div>
<span class="t" style="left:60.40px;top:220px;font-size:11px;line-height:12px;color:#3f62c2;-webkit-text-stroke:0.3px #3f62c2;"><span style="letter-spacing:0.52px">validation</span><span style="letter-spacing:0.15px">-</span><span style="letter-spacing:0.55px">api</span><span style="letter-spacing:0.15px">-</span>1<span style="letter-spacing:0.12px">.</span>1<span style="letter-spacing:0.12px">.</span>0<span style="letter-spacing:0.12px">.</span>F<span style="letter-spacing:0.48px">inal</span><span style="letter-spacing:0.12px">.</span><span style="letter-spacing:0.45px">jar</span></span>
<span class="t" style="left:241.30px;top:221px;font-size:11px;line-height:12px;color:#2a2a2a;-webkit-text-stroke:0.3px #2a2a2a;">B<span style="letter-spacing:0.69px">ean</span><span style="letter-spacing:0.12px"> </span>V<span style="letter-spacing:0.51px">alidation</span><span style="letter-spacing:0.12px"> </span><span style="letter-spacing:-0.48px">API</span></span>
<span class="t" style="left:422.50px;top:221px;font-size:11px;line-height:12px;color:#2a2a2a;-webkit-text-stroke:0.3px #2a2a2a;"><span style="letter-spacing:-0.32px">A</span><span style="letter-spacing:0.38px">pache</span><span style="letter-spacing:-0.01px"> </span><span style="letter-spacing:-0.27px">2</span><span style="letter-spacing:-0.01px">.</span><span style="letter-spacing:-0.27px">0</span></span>
<div class="a" style="left:5px;top:262px;width:23px;height:1px;background:#d2d2d2;"></div>
<div class="a" style="left:29px;top:262px;width:29px;height:1px;background:#d2d2d2;"></div>
<div class="a" style="left:59px;top:262px;width:180px;height:1px;background:#d2d2d2;"></div>
<div class="a" style="left:240px;top:262px;width:180px;height:1px;background:#d2d2d2;"></div>
<div class="a" style="left:421px;top:262px;width:181px;height:1px;background:#d2d2d2;"></div>
<div class="a" style="left:603px;top:262px;width:182px;height:1px;background:#d2d2d2;"></div>
<div class="a" style="left:10px;top:244px;width:12px;height:12px;border:1px solid #a6a6a6;border-radius:2px;background:linear-gradient(#f1f1f1,#d9d9d9);box-shadow:0 1px 1px rgba(0,0,0,.12);"></div>
<span class="t" style="left:60.40px;top:244px;font-size:11px;line-height:12px;color:#3f62c2;-webkit-text-stroke:0.3px #3f62c2;"><span style="letter-spacing:0.53px">polyglot</span><span style="letter-spacing:0.15px">-</span>0<span style="letter-spacing:0.12px">.</span>4<span style="letter-spacing:0.12px">.</span>3<span style="letter-spacing:0.12px">.</span><span style="letter-spacing:0.66px">min</span><span style="letter-spacing:0.12px">.</span><span style="letter-spacing:0.45px">js</span></span>
<span class="t" style="left:241.30px;top:245px;font-size:11px;line-height:12px;color:#2a2a2a;-webkit-text-stroke:0.3px #2a2a2a;"><span style="letter-spacing:-0.25px">G</span><span style="letter-spacing:0.37px">ive</span><span style="letter-spacing:0.03px"> </span><span style="letter-spacing:0.42px">your</span><span style="letter-spacing:0.03px"> </span><span style="letter-spacing:-0.16px">J</span><span style="letter-spacing:0.47px">ava</span><span style="letter-spacing:-0.22px">S</span><span style="letter-spacing:0.33px">cript</span><span style="letter-spacing:0.03px"> </span><span style="letter-spacing:0.4px">the</span><span style="letter-spacing:0.03px"> </span><span style="letter-spacing:0.32px">ability</span><span style="letter-spacing:0.03px"> </span><span style="letter-spacing:0.24px">t</span><span style="letter-spacing:0.11px">…</span></span>
<span class="t" style="left:422.50px;top:245px;font-size:11px;line-height:12px;color:#2a2a2a;-webkit-text-stroke:0.3px #2a2a2a;"><span style="letter-spacing:-0.75px">BSD</span><span style="letter-spacing:0.06px"> </span><span style="letter-spacing:-0.12px">2</span></span>
<div class="a" style="left:5px;top:286px;width:23px;height:1px;background:#d2d2d2;"></div>
<div class="a" style="left:29px;top:286px;width:29px;height:1px;background:#d2d2d2;"></div>
<div class="a" style="left:59px;top:286px;width:180px;height:1px;background:#d2d2d2;"></div>
<div class="a" style="left:240px;top:286px;width:180px;height:1px;background:#d2d2d2;"></div>
<div class="a" style="left:421px;top:286px;width:181px;height:1px;background:#d2d2d2;"></div>
<div class="a" style="left:603px;top:286px;width:182px;height:1px;background:#d2d2d2;"></div>
<div class="a" style="left:10px;top:268px;width:12px;height:12px;border:1px solid #a6a6a6;border-radius:2px;background:linear-gradient(#f1f1f1,#d9d9d9);box-shadow:0 1px 1px rgba(0,0,0,.12);"></div>
<span class="t" style="left:60.40px;top:268px;font-size:11px;line-height:12px;color:#3f62c2;-webkit-text-stroke:0.3px #3f62c2;"><span style="letter-spacing:0.42px">insecure</span><span style="letter-spacing:0.04px">-</span><span style="letter-spacing:0.38px">deserialization</span><span style="letter-spacing:0.04px">-</span><span style="letter-spacing:0.45px">v</span><span style="letter-spacing:-0.17px">8</span><span style="letter-spacing:0.04px">.</span><span style="letter-spacing:-0.17px">0</span><span style="letter-spacing:0.04px">.</span><span style="letter-spacing:-0.17px">0</span><span style="letter-spacing:0.08px">.…</span></span>
<span class="t" style="left:241.30px;top:269px;font-size:11px;line-height:12px;color:#2a2a2a;-webkit-text-stroke:0.3px #2a2a2a;"><span style="letter-spacing:0.4px">insecure</span><span style="letter-spacing:0.03px">-</span><span style="letter-spacing:0.36px">deserialization</span><span style="letter-spacing:0.03px">-</span><span style="letter-spacing:0.43px">v</span><span style="letter-spacing:-0.19px">8</span><span style="letter-spacing:0.03px">.</span><span style="letter-spacing:-0.19px">0</span><span style="letter-spacing:0.03px">.</span><span style="letter-spacing:-0.19px">0</span><span style="letter-spacing:0.06px">.…</span></span>
<span class="t" style="left:422.50px;top:269px;font-size:11px;line-height:12px;color:#2a2a2a;-webkit-text-stroke:0.3px #2a2a2a;"><span style="letter-spacing:-0.33px">R</span><span style="letter-spacing:0.34px">equires</span><span style="letter-spacing:-0.01px"> </span><span style="letter-spacing:-0.33px">R</span><span style="letter-spacing:0.37px">eview</span></span>
<div class="a" style="left:5px;top:310px;width:23px;height:1px;background:#d2d2d2;"></div>
<div class="a" style="left:29px;top:310px;width:29px;height:1px;background:#d2d2d2;"></div>
<div class="a" style="left:59px;top:310px;width:180px;height:1px;background:#d2d2d2;"></div>
<div class="a" style="left:240px;top:310px;width:180px;height:1px;background:#d2d2d2;"></div>
<div class="a" style="left:421px;top:310px;width:181px;height:1px;background:#d2d2d2;"></div>
<div class="a" style="left:603px;top:310px;width:182px;height:1px;background:#d2d2d2;"></div>
<div class="a" style="left:10px;top:292px;width:12px;height:12px;border:1px solid #a6a6a6;border-radius:2px;background:linear-gradient(#f1f1f1,#d9d9d9);box-shadow:0 1px 1px rgba(0,0,0,.12);"></div>
<span class="t" style="left:60.40px;top:292px;font-size:11px;line-height:12px;color:#3f62c2;-webkit-text-stroke:0.3px #3f62c2;"><span style="letter-spacing:0.07px">iast</span><span style="letter-spacing:-0.18px">-</span><span style="letter-spacing:0.09px">v</span><span style="letter-spacing:-0.53px">8</span><span style="letter-spacing:-0.15px">.</span><span style="letter-spacing:-0.53px">0</span><span style="letter-spacing:-0.15px">.</span><span style="letter-spacing:-0.53px">0</span><span style="letter-spacing:-0.15px">.</span><span style="letter-spacing:-0.69px;font-size:10.23px">SNAPSHOT</span><span style="letter-spacing:-0.15px">.</span><span style="letter-spacing:0.06px">jar</span></span>
<span class="t" style="left:422.50px;top:293px;font-size:11px;line-height:12px;color:#2a2a2a;-webkit-text-stroke:0.3px #2a2a2a;"><span style="letter-spacing:-0.33px">R</span><span style="letter-spacing:0.34px">equires</span><span style="letter-spacing:-0.01px"> </span><span style="letter-spacing:-0.33px">R</span><span style="letter-spacing:0.37px">eview</span></span>
</div>
<div class="a" style="left:1142px;top:496px;width:17px;height:297px;background:rgba(246,246,246,0.88);"></div>
<div class="a" style="left:1144px;top:513px;width:13px;height:25px;background:rgba(198,198,198,0.78);"></div>
<svg class="a" style="left:1142.1px;top:497px" width="16" height="296"><path d="M4.4 10.2L8 6L11.6 10.2Z" fill="#b8b8b8"/><path d="M4.4 284.8L8 289L11.6 284.8Z" fill="#7a7a7a"/></svg>
<div class="a" style="left:836px;top:801px;width:13px;height:18px;background:#f5a11c;"></div>
<span class="t" style="left:838.50px;top:804px;font-size:12px;line-height:14px;color:#fff;font-weight:bold;">S</span>
<span class="t" style="left:852.80px;top:803px;font-size:13px;line-height:15px;color:#2a2a2a;-webkit-text-stroke:0.2px #2a2a2a;"><span style="letter-spacing:0.06px">- </span><span style="letter-spacing:0.55px">source</span><span style="letter-spacing:0.05px"> </span><span style="letter-spacing:0.6px">code</span><span style="letter-spacing:0.05px"> </span><span style="letter-spacing:0.43px">library</span></span>
<div class="a" style="left:993px;top:801px;width:14px;height:18px;background:#5b7fd4;"></div>
<span class="t" style="left:996.00px;top:804px;font-size:12px;line-height:14px;color:#fff;font-weight:bold;">P</span>
<span class="t" style="left:1010.90px;top:803px;font-size:13px;line-height:15px;color:#2a2a2a;-webkit-text-stroke:0.2px #2a2a2a;"><span style="letter-spacing:0.02px">- </span><span style="letter-spacing:0.49px">pending</span></span>
<div class="a" style="left:1082px;top:801px;width:15px;height:18px;background:#d0260f;"></div>
<span class="t" style="left:1085.17px;top:804px;font-size:12px;line-height:14px;color:#fff;font-weight:bold;">R</span>
<span class="t" style="left:1100.40px;top:803px;font-size:13px;line-height:15px;color:#2a2a2a;-webkit-text-stroke:0.2px #2a2a2a;"><span style="letter-spacing:0.02px">- </span><span style="letter-spacing:0.43px">rejected</span></span>
<span class="t" style="left:1188.40px;top:478px;font-size:16px;line-height:17px;color:#3a3a3a;"><span style="letter-spacing:-0.48px">L</span><span style="letter-spacing:0.34px">ibraries</span><span style="letter-spacing:-0.07px"> </span><span style="letter-spacing:0.33px">in</span><span style="letter-spacing:-0.07px"> </span><span style="letter-spacing:0.45px">use</span><span style="letter-spacing:-0.07px">:</span></span>
<span class="t" style="left:1310.50px;top:478px;font-size:16px;line-height:17px;color:#222;font-weight:bold;"><span style="letter-spacing:-0.33px">132</span></span>
<span class="t" style="left:1188.40px;top:800px;font-size:16px;line-height:17px;color:#3a3a3a;"><span style="letter-spacing:-0.77px">T</span><span style="letter-spacing:0.16px">otal</span><span style="letter-spacing:-0.18px"> </span><span style="letter-spacing:-0.7px">L</span><span style="letter-spacing:0.19px">icense</span><span style="letter-spacing:-0.18px"> </span><span style="letter-spacing:-0.77px">T</span><span style="letter-spacing:0.21px">ypes</span><span style="letter-spacing:-0.18px">:</span></span>
<span class="t" style="left:1340.50px;top:800px;font-size:16px;line-height:17px;color:#222;font-weight:bold;"><span style="letter-spacing:-0.4px">15</span></span>
<svg class="a" style="left:0;top:0" width="1810" height="834"><path d="M1499.80 641.80A135 135 0 0 1 1495.44 675.82L1429.64 658.68A67 67 0 0 0 1431.80 641.80Z" fill="#cf2711"/><path d="M1495.44 675.82A135 135 0 0 1 1493.88 681.33L1428.86 661.42A67 67 0 0 0 1429.64 658.68Z" fill="#e8290f"/><path d="M1493.88 681.33A135 135 0 0 1 1492.09 686.77L1427.97 664.12A67 67 0 0 0 1428.86 661.42Z" fill="#ee3b24"/><path d="M1492.09 686.77A135 135 0 0 1 1473.34 722.08L1418.67 681.64A67 67 0 0 0 1427.97 664.12Z" fill="#f5a11c"/><path d="M1473.34 722.08A135 135 0 0 1 1466.14 730.99L1415.10 686.07A67 67 0 0 0 1418.67 681.64Z" fill="#f5a82e"/><path d="M1466.14 730.99A135 135 0 0 1 1462.26 735.21L1413.17 688.16A67 67 0 0 0 1415.10 686.07Z" fill="#f7b146"/><path d="M1462.26 735.21A135 135 0 0 1 1234.16 607.78L1299.96 624.92A67 67 0 0 0 1413.17 688.16Z" fill="#76a122"/><path d="M1234.16 607.78A135 135 0 0 1 1284.52 533.26L1324.96 587.93A67 67 0 0 0 1299.96 624.92Z" fill="#84b527"/><path d="M1284.52 533.26A135 135 0 0 1 1289.20 529.95L1327.28 586.29A67 67 0 0 0 1324.96 587.93Z" fill="#8fc62b"/><path d="M1289.20 529.95A135 135 0 0 1 1294.02 526.84L1329.67 584.75A67 67 0 0 0 1327.28 586.29Z" fill="#9dd934"/><path d="M1294.02 526.84A135 135 0 0 1 1298.96 523.94L1332.12 583.31A67 67 0 0 0 1329.67 584.75Z" fill="#76a122"/><path d="M1298.96 523.94A135 135 0 0 1 1304.02 521.26L1334.64 581.97A67 67 0 0 0 1332.12 583.31Z" fill="#93a3a6"/><path d="M1304.02 521.26A135 135 0 0 1 1309.19 518.78L1337.20 580.75A67 67 0 0 0 1334.64 581.97Z" fill="#a1afb1"/><path d="M1309.19 518.78A135 135 0 0 1 1314.46 516.53L1339.82 579.63A67 67 0 0 0 1337.20 580.75Z" fill="#b0bbbc"/><path d="M1314.46 516.53A135 135 0 0 1 1319.83 514.51L1342.48 578.63A67 67 0 0 0 1339.82 579.63Z" fill="#c0c9ca"/><path d="M1319.83 514.51A135 135 0 0 1 1499.80 641.80L1431.80 641.80A67 67 0 0 0 1342.48 578.63Z" fill="#cfcaa8"/></svg>
<div class="a" style="left:1537px;top:509px;width:12px;height:12px;background:#cf2711;"></div>
<span class="t" style="left:1556.60px;top:509.5px;font-size:11px;line-height:12px;color:#727272;"><span style="letter-spacing:-0.41px">E</span><span style="letter-spacing:0.23px">clipse</span><span style="letter-spacing:-0.05px"> </span><span style="letter-spacing:-0.34px">1</span><span style="letter-spacing:-0.05px">.</span><span style="letter-spacing:-0.34px">0</span></span>
<div class="a" style="left:1537px;top:530px;width:12px;height:12px;background:#e8290f;"></div>
<span class="t" style="left:1556.60px;top:530.5px;font-size:11px;line-height:12px;color:#727272;"><span style="letter-spacing:-0.67px">GPL</span><span style="letter-spacing:0.09px"> </span><span style="letter-spacing:-0.06px">3</span><span style="letter-spacing:0.09px">.</span><span style="letter-spacing:-0.06px">0</span></span>
<div class="a" style="left:1537px;top:551px;width:12px;height:12px;background:#ee3b24;"></div>
<span class="t" style="left:1556.60px;top:551.5px;font-size:11px;line-height:12px;color:#727272;"><span style="letter-spacing:-0.67px">GPL</span><span style="letter-spacing:0.09px"> </span><span style="letter-spacing:-0.06px">2</span><span style="letter-spacing:0.09px">.</span><span style="letter-spacing:-0.06px">0</span></span>
<div class="a" style="left:1537px;top:572px;width:12px;height:12px;background:#f5a11c;"></div>
<span class="t" style="left:1556.60px;top:572.5px;font-size:11px;line-height:12px;color:#727272;"><span style="letter-spacing:-0.26px;font-size:10.23px">LGPL</span><span style="letter-spacing:0.04px"> </span><span style="letter-spacing:-0.17px">2</span><span style="letter-spacing:0.04px">.</span><span style="letter-spacing:-0.17px">1</span></span>
<div class="a" style="left:1537px;top:593px;width:12px;height:12px;background:#f5a82e;"></div>
<span class="t" style="left:1556.60px;top:593.5px;font-size:11px;line-height:12px;color:#727272;"><span style="letter-spacing:-0.17px;font-size:10.23px">LGPL</span><span style="letter-spacing:0.08px"> </span><span style="letter-spacing:-0.09px">3</span><span style="letter-spacing:0.08px">.</span><span style="letter-spacing:-0.09px">0</span></span>
<div class="a" style="left:1537px;top:614px;width:12px;height:12px;background:#f7b146;"></div>
<span class="t" style="left:1556.60px;top:614.5px;font-size:11px;line-height:12px;color:#727272;"><span style="letter-spacing:0.2px;font-size:10.23px">CDDL</span><span style="letter-spacing:0.26px"> </span><span style="letter-spacing:0.25px">1</span><span style="letter-spacing:0.26px">.</span><span style="letter-spacing:0.25px">0</span></span>
<div class="a" style="left:1537px;top:635px;width:12px;height:12px;background:#76a122;"></div>
<span class="t" style="left:1556.60px;top:635.5px;font-size:11px;line-height:12px;color:#727272;"><span style="letter-spacing:-0.12px">A</span><span style="letter-spacing:0.56px">pache</span><span style="letter-spacing:0.07px"> </span><span style="letter-spacing:-0.1px">2</span><span style="letter-spacing:0.07px">.</span><span style="letter-spacing:-0.1px">0</span></span>
<div class="a" style="left:1537px;top:656px;width:12px;height:12px;background:#84b527;"></div>
<span class="t" style="left:1556.60px;top:656.5px;font-size:11px;line-height:12px;color:#727272;"><span style="letter-spacing:-0.01px">MIT</span></span>
<div class="a" style="left:1537px;top:677px;width:12px;height:12px;background:#8fc62b;"></div>
<span class="t" style="left:1556.60px;top:677.5px;font-size:11px;line-height:12px;color:#727272;"><span style="letter-spacing:-0.56px">BSD</span><span style="letter-spacing:0.15px"> </span><span style="letter-spacing:0.05px">3</span></span>
<div class="a" style="left:1537px;top:698px;width:12px;height:12px;background:#9dd934;"></div>
<span class="t" style="left:1556.60px;top:698.5px;font-size:11px;line-height:12px;color:#727272;"><span style="letter-spacing:-0.56px">BSD</span><span style="letter-spacing:0.15px"> </span><span style="letter-spacing:0.05px">2</span></span>
<div class="a" style="left:1537px;top:719px;width:12px;height:12px;background:#76a122;"></div>
<span class="t" style="left:1556.60px;top:719.5px;font-size:11px;line-height:12px;color:#727272;"><span style="letter-spacing:-0.07px">M</span><span style="letter-spacing:0.43px">ozilla</span><span style="letter-spacing:0.1px"> </span><span style="letter-spacing:-0.05px">1</span><span style="letter-spacing:0.1px">.</span><span style="letter-spacing:-0.05px">1</span></span>
<div class="a" style="left:1636px;top:509px;width:12px;height:12px;background:#93a3a6;"></div>
<span class="t" style="left:1655.50px;top:509.5px;font-size:11px;line-height:12px;color:#727272;"><span style="letter-spacing:0.17px">D</span><span style="letter-spacing:1.04px">om</span><span style="letter-spacing:0.13px">4</span><span style="letter-spacing:0.33px">j</span></span>
<div class="a" style="left:1636px;top:530px;width:12px;height:12px;background:#a1afb1;"></div>
<span class="t" style="left:1655.50px;top:530.5px;font-size:11px;line-height:12px;color:#727272;"><span style="letter-spacing:-0.0px;font-size:10.23px">CDDL</span><span style="letter-spacing:0.16px"> </span><span style="letter-spacing:0.61px">or</span><span style="letter-spacing:0.16px"> </span><span style="letter-spacing:-0.52px">GPL</span><span style="letter-spacing:0.69px">v</span><span style="letter-spacing:0.07px">2</span><span style="letter-spacing:0.16px"> </span><span style="letter-spacing:0.61px">with</span><span style="letter-spacing:0.16px"> </span><span style="letter-spacing:0.77px">e</span><span style="letter-spacing:0.16px">..</span></span>
<div class="a" style="left:1636px;top:551px;width:12px;height:12px;background:#b0bbbc;"></div>
<span class="t" style="left:1655.50px;top:551.5px;font-size:11px;line-height:12px;color:#727272;"><span style="letter-spacing:0.29px;font-size:10.23px">HSQLDB</span></span>
<div class="a" style="left:1636px;top:572px;width:12px;height:12px;background:#c0c9ca;"></div>
<span class="t" style="left:1655.50px;top:572.5px;font-size:11px;line-height:12px;color:#727272;"><span style="letter-spacing:-0.79px">CC</span><span style="letter-spacing:0.06px"> </span><span style="letter-spacing:-0.73px">BY</span><span style="letter-spacing:0.06px"> </span><span style="letter-spacing:-0.12px">3</span><span style="letter-spacing:0.06px">.</span><span style="letter-spacing:-0.12px">0</span></span>
<div class="a" style="left:1636px;top:593px;width:12px;height:12px;background:#cfcaa8;"></div>
<span class="t" style="left:1655.50px;top:593.5px;font-size:11px;line-height:12px;color:#727272;"><span style="letter-spacing:-0.5px">R</span><span style="letter-spacing:0.22px">equires</span><span style="letter-spacing:-0.07px"> </span><span style="letter-spacing:-0.5px">R</span><span style="letter-spacing:0.24px">eview</span></span>
</body></html>
